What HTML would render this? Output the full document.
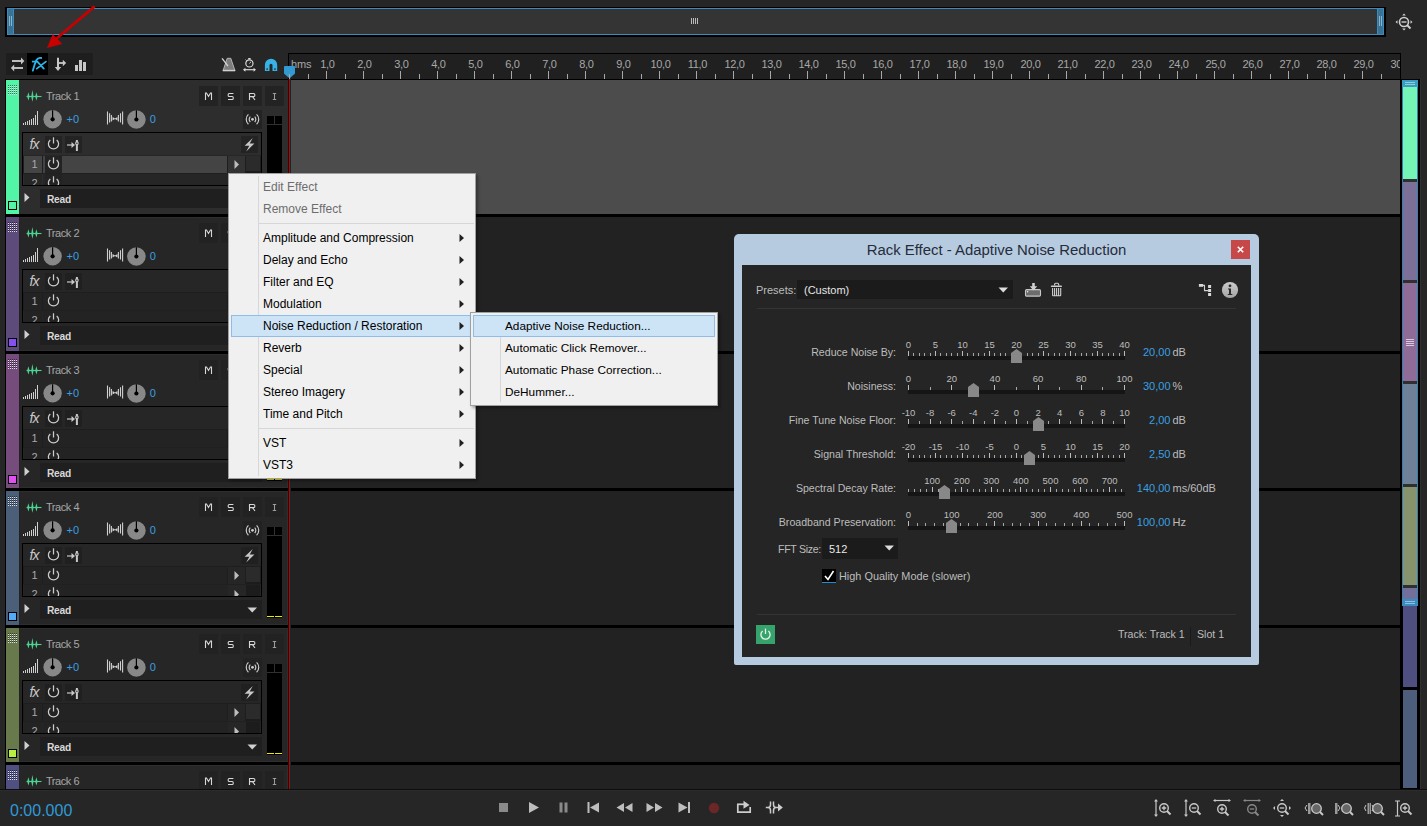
<!DOCTYPE html>
<html><head><meta charset="utf-8"><title>Rack Effect</title>
<style>
html,body{margin:0;padding:0;}
body{width:1427px;height:826px;overflow:hidden;background:#262626;position:relative;font-family:"Liberation Sans", sans-serif;}
body div{position:absolute;box-sizing:border-box;}
.t{white-space:pre;line-height:1;}
svg{overflow:visible}
</style></head><body>

<div style="left:5px;top:7px;width:1381px;height:30px;background:#000;"></div>
<div style="left:7px;top:8px;width:1377px;height:27px;background:#3a8cc0;"></div>
<div style="left:7px;top:9px;width:1377px;height:25px;background:#343434;"></div>
<div style="left:7px;top:8px;width:7px;height:27px;background:#3a8cc0;"></div>
<div style="left:8px;top:9px;width:5px;height:25px;background:#3a7294;"></div>
<div style="left:9px;top:16px;width:1px;height:10px;background:#8ab4c8;"></div>
<div style="left:11px;top:16px;width:1px;height:10px;background:#8ab4c8;"></div>
<div style="left:1377px;top:8px;width:7px;height:27px;background:#3a8cc0;"></div>
<div style="left:1378px;top:9px;width:5px;height:25px;background:#3a7294;"></div>
<div style="left:1379px;top:16px;width:1px;height:10px;background:#8ab4c8;"></div>
<div style="left:1381px;top:16px;width:1px;height:10px;background:#8ab4c8;"></div>
<div style="left:691px;top:18px;width:1px;height:6px;background:#bbbbbb;"></div>
<div style="left:693px;top:18px;width:1px;height:6px;background:#bbbbbb;"></div>
<div style="left:695px;top:18px;width:1px;height:6px;background:#bbbbbb;"></div>
<div style="left:697px;top:18px;width:1px;height:6px;background:#bbbbbb;"></div>
<svg style="position:absolute;left:1395px;top:13px;" width="20" height="20" viewBox="0 0 20 20">
<circle cx="9" cy="9" r="4.5" fill="none" stroke="#cfcfcf" stroke-width="1.6"/>
<line x1="6.5" y1="9" x2="11.5" y2="9" stroke="#cfcfcf" stroke-width="1.4"/>
<line x1="12" y1="12" x2="15.5" y2="15.5" stroke="#cfcfcf" stroke-width="2"/>
<path d="M9 0.5 L10.8 2.5 L7.2 2.5Z M9 17.5 L10.8 15.5 L7.2 15.5Z M0.5 9 L2.5 7.2 L2.5 10.8Z M17.5 9 L15.5 7.2 L15.5 10.8Z" fill="#cfcfcf"/>
</svg>
<div style="left:6px;top:53px;width:87px;height:22px;background:#1e1e1e;"></div>
<div style="left:27px;top:53px;width:21px;height:22px;background:#000;"></div>
<svg style="position:absolute;left:9px;top:54px;" width="18" height="17" viewBox="0 0 18 17">
<path d="M3 7 H13" stroke="#d0d0d0" stroke-width="1.8"/>
<path d="M12 3.6 L15.3 7 L12 10.4Z" fill="#c8c8c8"/>
<path d="M4.5 14 H14" stroke="#d0d0d0" stroke-width="1.8"/>
<path d="M5.2 10.6 L1.9 14 L5.2 17.4Z" fill="#c8c8c8"/>
</svg>
<svg style="position:absolute;left:27px;top:53px;" width="21" height="22" viewBox="0 0 21 22"><path d="M5.8 17.7 Q7.5 11 9.5 7 Q11 4.3 14.2 5" fill="none" stroke="#2cb4ea" stroke-width="1.8" stroke-linecap="round"/><path d="M4.9 8.6 H10.1" stroke="#2cb4ea" stroke-width="1.7"/><path d="M10.3 8.6 L16.8 15.6 M18.9 8.6 L9.8 15.6" stroke="#2cb4ea" stroke-width="1.8" stroke-linecap="round"/></svg>
<svg style="position:absolute;left:52px;top:56px;" width="16" height="17" viewBox="0 0 16 17">
<path d="M6 1.8 V12" stroke="#c8c8c8" stroke-width="2"/>
<path d="M2.8 11 L6 15 L9.2 11Z" fill="#c8c8c8"/>
<path d="M6.5 7 H11.5" stroke="#c8c8c8" stroke-width="1.8"/>
<path d="M10.8 3.8 L14.2 7 L10.8 10.2Z" fill="#c8c8c8"/>
</svg>
<svg style="position:absolute;left:73px;top:58px;" width="14" height="14" viewBox="0 0 14 14">
<rect x="2" y="7" width="3" height="6" fill="#c8c8c8"/>
<rect x="6" y="2" width="3" height="11" fill="#c8c8c8"/>
<rect x="10" y="4" width="3" height="9" fill="#c8c8c8"/>
</svg>
<svg style="position:absolute;left:220px;top:55px;" width="18" height="18" viewBox="0 0 18 18"><path d="M7.2 3.3 H10.8 L15 15.8 H3Z" fill="#7c7c7c" stroke="#bdbdbd" stroke-width="0.9"/><rect x="2.8" y="14.8" width="12.4" height="1.3" fill="#d0d0d0"/><path d="M2.1 3.3 L8 11.2" stroke="#d8d8d8" stroke-width="1.3"/></svg>
<svg style="position:absolute;left:240px;top:55px;" width="18" height="18" viewBox="0 0 18 18"><circle cx="9.4" cy="8.4" r="3.6" fill="none" stroke="#d8d8d8" stroke-width="1.2"/><path d="M9.4 8.4 L11 6.8" stroke="#d8d8d8" stroke-width="1"/><rect x="8.2" y="3" width="2.4" height="1.4" fill="#d8d8d8"/><path d="M5.6 4.6 L6.6 5.6" stroke="#d8d8d8" stroke-width="1"/><path d="M4 14.7 H15" stroke="#d8d8d8" stroke-width="1.2"/><path d="M3 14.7 L5.4 12.7 V16.7Z M16 14.7 L13.6 12.7 V16.7Z" fill="#d8d8d8"/></svg>
<svg style="position:absolute;left:262px;top:56px;" width="18" height="16" viewBox="0 0 18 16"><path d="M2.9 15.1 V8.95 A6.15 6.15 0 0 1 15.2 8.95 V15.1 H10.5 V9.2 A1.5 1.5 0 0 0 7.5 9.2 V15.1Z" fill="#38b2e6"/><rect x="4.4" y="12.3" width="1.5" height="1.6" fill="#1a3a4a"/><rect x="12.2" y="12.3" width="1.5" height="1.6" fill="#1a3a4a"/></svg>
<div style="left:288px;top:53px;width:1113px;height:26px;background:#000;"></div>
<div style="left:289px;top:54px;width:1111px;height:25px;background:#202020;"></div>
<div style="left:289px;top:54px;width:1111px;height:25px;overflow:hidden">
<svg style="position:absolute;left:0;top:0" width="1111" height="25"><rect x="19" y="20" width="1" height="5" fill="#a8a8a8"/><rect x="37" y="17" width="1" height="8" fill="#a8a8a8"/><rect x="56" y="20" width="1" height="5" fill="#a8a8a8"/><rect x="74" y="17" width="1" height="8" fill="#a8a8a8"/><rect x="93" y="20" width="1" height="5" fill="#a8a8a8"/><rect x="111" y="17" width="1" height="8" fill="#a8a8a8"/><rect x="130" y="20" width="1" height="5" fill="#a8a8a8"/><rect x="148" y="17" width="1" height="8" fill="#a8a8a8"/><rect x="167" y="20" width="1" height="5" fill="#a8a8a8"/><rect x="185" y="17" width="1" height="8" fill="#a8a8a8"/><rect x="204" y="20" width="1" height="5" fill="#a8a8a8"/><rect x="222" y="17" width="1" height="8" fill="#a8a8a8"/><rect x="241" y="20" width="1" height="5" fill="#a8a8a8"/><rect x="259" y="17" width="1" height="8" fill="#a8a8a8"/><rect x="278" y="20" width="1" height="5" fill="#a8a8a8"/><rect x="296" y="17" width="1" height="8" fill="#a8a8a8"/><rect x="315" y="20" width="1" height="5" fill="#a8a8a8"/><rect x="333" y="17" width="1" height="8" fill="#a8a8a8"/><rect x="352" y="20" width="1" height="5" fill="#a8a8a8"/><rect x="370" y="17" width="1" height="8" fill="#a8a8a8"/><rect x="389" y="20" width="1" height="5" fill="#a8a8a8"/><rect x="407" y="17" width="1" height="8" fill="#a8a8a8"/><rect x="426" y="20" width="1" height="5" fill="#a8a8a8"/><rect x="444" y="17" width="1" height="8" fill="#a8a8a8"/><rect x="463" y="20" width="1" height="5" fill="#a8a8a8"/><rect x="481" y="17" width="1" height="8" fill="#a8a8a8"/><rect x="500" y="20" width="1" height="5" fill="#a8a8a8"/><rect x="518" y="17" width="1" height="8" fill="#a8a8a8"/><rect x="537" y="20" width="1" height="5" fill="#a8a8a8"/><rect x="555" y="17" width="1" height="8" fill="#a8a8a8"/><rect x="574" y="20" width="1" height="5" fill="#a8a8a8"/><rect x="592" y="17" width="1" height="8" fill="#a8a8a8"/><rect x="611" y="20" width="1" height="5" fill="#a8a8a8"/><rect x="629" y="17" width="1" height="8" fill="#a8a8a8"/><rect x="648" y="20" width="1" height="5" fill="#a8a8a8"/><rect x="666" y="17" width="1" height="8" fill="#a8a8a8"/><rect x="685" y="20" width="1" height="5" fill="#a8a8a8"/><rect x="703" y="17" width="1" height="8" fill="#a8a8a8"/><rect x="722" y="20" width="1" height="5" fill="#a8a8a8"/><rect x="740" y="17" width="1" height="8" fill="#a8a8a8"/><rect x="759" y="20" width="1" height="5" fill="#a8a8a8"/><rect x="777" y="17" width="1" height="8" fill="#a8a8a8"/><rect x="796" y="20" width="1" height="5" fill="#a8a8a8"/><rect x="814" y="17" width="1" height="8" fill="#a8a8a8"/><rect x="833" y="20" width="1" height="5" fill="#a8a8a8"/><rect x="851" y="17" width="1" height="8" fill="#a8a8a8"/><rect x="870" y="20" width="1" height="5" fill="#a8a8a8"/><rect x="888" y="17" width="1" height="8" fill="#a8a8a8"/><rect x="907" y="20" width="1" height="5" fill="#a8a8a8"/><rect x="925" y="17" width="1" height="8" fill="#a8a8a8"/><rect x="944" y="20" width="1" height="5" fill="#a8a8a8"/><rect x="962" y="17" width="1" height="8" fill="#a8a8a8"/><rect x="981" y="20" width="1" height="5" fill="#a8a8a8"/><rect x="999" y="17" width="1" height="8" fill="#a8a8a8"/><rect x="1018" y="20" width="1" height="5" fill="#a8a8a8"/><rect x="1036" y="17" width="1" height="8" fill="#a8a8a8"/><rect x="1055" y="20" width="1" height="5" fill="#a8a8a8"/><rect x="1073" y="17" width="1" height="8" fill="#a8a8a8"/><rect x="1092" y="20" width="1" height="5" fill="#a8a8a8"/></svg>
<div class="t" style="left:2px;top:4px;font-size:11px;color:#a8a8a8;line-height:12px;letter-spacing:-0.2px">hms</div>
<div class="t" style="left:8.5px;width:60px;text-align:center;top:4px;font-size:11px;color:#a8a8a8;line-height:12px;letter-spacing:-0.3px">1,0</div>
<div class="t" style="left:45.5px;width:60px;text-align:center;top:4px;font-size:11px;color:#a8a8a8;line-height:12px;letter-spacing:-0.3px">2,0</div>
<div class="t" style="left:82.5px;width:60px;text-align:center;top:4px;font-size:11px;color:#a8a8a8;line-height:12px;letter-spacing:-0.3px">3,0</div>
<div class="t" style="left:119.5px;width:60px;text-align:center;top:4px;font-size:11px;color:#a8a8a8;line-height:12px;letter-spacing:-0.3px">4,0</div>
<div class="t" style="left:156.5px;width:60px;text-align:center;top:4px;font-size:11px;color:#a8a8a8;line-height:12px;letter-spacing:-0.3px">5,0</div>
<div class="t" style="left:193.5px;width:60px;text-align:center;top:4px;font-size:11px;color:#a8a8a8;line-height:12px;letter-spacing:-0.3px">6,0</div>
<div class="t" style="left:230.5px;width:60px;text-align:center;top:4px;font-size:11px;color:#a8a8a8;line-height:12px;letter-spacing:-0.3px">7,0</div>
<div class="t" style="left:267.5px;width:60px;text-align:center;top:4px;font-size:11px;color:#a8a8a8;line-height:12px;letter-spacing:-0.3px">8,0</div>
<div class="t" style="left:304.5px;width:60px;text-align:center;top:4px;font-size:11px;color:#a8a8a8;line-height:12px;letter-spacing:-0.3px">9,0</div>
<div class="t" style="left:341.5px;width:60px;text-align:center;top:4px;font-size:11px;color:#a8a8a8;line-height:12px;letter-spacing:-0.3px">10,0</div>
<div class="t" style="left:378.5px;width:60px;text-align:center;top:4px;font-size:11px;color:#a8a8a8;line-height:12px;letter-spacing:-0.3px">11,0</div>
<div class="t" style="left:415.5px;width:60px;text-align:center;top:4px;font-size:11px;color:#a8a8a8;line-height:12px;letter-spacing:-0.3px">12,0</div>
<div class="t" style="left:452.5px;width:60px;text-align:center;top:4px;font-size:11px;color:#a8a8a8;line-height:12px;letter-spacing:-0.3px">13,0</div>
<div class="t" style="left:489.5px;width:60px;text-align:center;top:4px;font-size:11px;color:#a8a8a8;line-height:12px;letter-spacing:-0.3px">14,0</div>
<div class="t" style="left:526.5px;width:60px;text-align:center;top:4px;font-size:11px;color:#a8a8a8;line-height:12px;letter-spacing:-0.3px">15,0</div>
<div class="t" style="left:563.5px;width:60px;text-align:center;top:4px;font-size:11px;color:#a8a8a8;line-height:12px;letter-spacing:-0.3px">16,0</div>
<div class="t" style="left:600.5px;width:60px;text-align:center;top:4px;font-size:11px;color:#a8a8a8;line-height:12px;letter-spacing:-0.3px">17,0</div>
<div class="t" style="left:637.5px;width:60px;text-align:center;top:4px;font-size:11px;color:#a8a8a8;line-height:12px;letter-spacing:-0.3px">18,0</div>
<div class="t" style="left:674.5px;width:60px;text-align:center;top:4px;font-size:11px;color:#a8a8a8;line-height:12px;letter-spacing:-0.3px">19,0</div>
<div class="t" style="left:711.5px;width:60px;text-align:center;top:4px;font-size:11px;color:#a8a8a8;line-height:12px;letter-spacing:-0.3px">20,0</div>
<div class="t" style="left:748.5px;width:60px;text-align:center;top:4px;font-size:11px;color:#a8a8a8;line-height:12px;letter-spacing:-0.3px">21,0</div>
<div class="t" style="left:785.5px;width:60px;text-align:center;top:4px;font-size:11px;color:#a8a8a8;line-height:12px;letter-spacing:-0.3px">22,0</div>
<div class="t" style="left:822.5px;width:60px;text-align:center;top:4px;font-size:11px;color:#a8a8a8;line-height:12px;letter-spacing:-0.3px">23,0</div>
<div class="t" style="left:859.5px;width:60px;text-align:center;top:4px;font-size:11px;color:#a8a8a8;line-height:12px;letter-spacing:-0.3px">24,0</div>
<div class="t" style="left:896.5px;width:60px;text-align:center;top:4px;font-size:11px;color:#a8a8a8;line-height:12px;letter-spacing:-0.3px">25,0</div>
<div class="t" style="left:933.5px;width:60px;text-align:center;top:4px;font-size:11px;color:#a8a8a8;line-height:12px;letter-spacing:-0.3px">26,0</div>
<div class="t" style="left:970.5px;width:60px;text-align:center;top:4px;font-size:11px;color:#a8a8a8;line-height:12px;letter-spacing:-0.3px">27,0</div>
<div class="t" style="left:1007.5px;width:60px;text-align:center;top:4px;font-size:11px;color:#a8a8a8;line-height:12px;letter-spacing:-0.3px">28,0</div>
<div class="t" style="left:1044.5px;width:60px;text-align:center;top:4px;font-size:11px;color:#a8a8a8;line-height:12px;letter-spacing:-0.3px">29,0</div>
<div class="t" style="left:1081.5px;width:60px;text-align:center;top:4px;font-size:11px;color:#a8a8a8;line-height:12px;letter-spacing:-0.3px">30,0</div>
</div>
<svg style="position:absolute;left:284px;top:66px;" width="12" height="13" viewBox="0 0 12 13"><path d="M0 1 Q0 0 1 0 H10 Q11 0 11 1 V7.5 L5.5 12.5 L0 7.5Z" fill="#3399d0"/><rect x="5" y="8" width="1" height="5" fill="#aaaaaa"/></svg>
<div style="left:5px;top:79px;width:284px;height:711px;background:#000;"></div>
<div style="left:6px;top:80px;width:282px;height:134px;overflow:hidden;background:#2d2d2d">
<div style="left:0px;top:0px;width:13px;height:134px;background:#52f5a6;"></div>
<svg style="position:absolute;left:1px;top:4px" width="11" height="14" viewBox="0 0 11 14"><rect x="1" y="2" width="1" height="1" fill="#e0e0ea"/><rect x="1" y="1" width="1" height="1" fill="#000" fill-opacity="0.5"/><rect x="1" y="4" width="1" height="1" fill="#e0e0ea"/><rect x="1" y="3" width="1" height="1" fill="#000" fill-opacity="0.5"/><rect x="1" y="6" width="1" height="1" fill="#e0e0ea"/><rect x="1" y="5" width="1" height="1" fill="#000" fill-opacity="0.5"/><rect x="1" y="8" width="1" height="1" fill="#e0e0ea"/><rect x="1" y="7" width="1" height="1" fill="#000" fill-opacity="0.5"/><rect x="1" y="10" width="1" height="1" fill="#e0e0ea"/><rect x="1" y="9" width="1" height="1" fill="#000" fill-opacity="0.5"/><rect x="3" y="2" width="1" height="1" fill="#e0e0ea"/><rect x="3" y="1" width="1" height="1" fill="#000" fill-opacity="0.5"/><rect x="3" y="4" width="1" height="1" fill="#e0e0ea"/><rect x="3" y="3" width="1" height="1" fill="#000" fill-opacity="0.5"/><rect x="3" y="6" width="1" height="1" fill="#e0e0ea"/><rect x="3" y="5" width="1" height="1" fill="#000" fill-opacity="0.5"/><rect x="3" y="8" width="1" height="1" fill="#e0e0ea"/><rect x="3" y="7" width="1" height="1" fill="#000" fill-opacity="0.5"/><rect x="3" y="10" width="1" height="1" fill="#e0e0ea"/><rect x="3" y="9" width="1" height="1" fill="#000" fill-opacity="0.5"/><rect x="5" y="2" width="1" height="1" fill="#e0e0ea"/><rect x="5" y="1" width="1" height="1" fill="#000" fill-opacity="0.5"/><rect x="5" y="4" width="1" height="1" fill="#e0e0ea"/><rect x="5" y="3" width="1" height="1" fill="#000" fill-opacity="0.5"/><rect x="5" y="6" width="1" height="1" fill="#e0e0ea"/><rect x="5" y="5" width="1" height="1" fill="#000" fill-opacity="0.5"/><rect x="5" y="8" width="1" height="1" fill="#e0e0ea"/><rect x="5" y="7" width="1" height="1" fill="#000" fill-opacity="0.5"/><rect x="5" y="10" width="1" height="1" fill="#e0e0ea"/><rect x="5" y="9" width="1" height="1" fill="#000" fill-opacity="0.5"/><rect x="7" y="2" width="1" height="1" fill="#e0e0ea"/><rect x="7" y="1" width="1" height="1" fill="#000" fill-opacity="0.5"/><rect x="7" y="4" width="1" height="1" fill="#e0e0ea"/><rect x="7" y="3" width="1" height="1" fill="#000" fill-opacity="0.5"/><rect x="7" y="6" width="1" height="1" fill="#e0e0ea"/><rect x="7" y="5" width="1" height="1" fill="#000" fill-opacity="0.5"/><rect x="7" y="8" width="1" height="1" fill="#e0e0ea"/><rect x="7" y="7" width="1" height="1" fill="#000" fill-opacity="0.5"/><rect x="7" y="10" width="1" height="1" fill="#e0e0ea"/><rect x="7" y="9" width="1" height="1" fill="#000" fill-opacity="0.5"/><rect x="9" y="2" width="1" height="1" fill="#e0e0ea"/><rect x="9" y="1" width="1" height="1" fill="#000" fill-opacity="0.5"/><rect x="9" y="4" width="1" height="1" fill="#e0e0ea"/><rect x="9" y="3" width="1" height="1" fill="#000" fill-opacity="0.5"/><rect x="9" y="6" width="1" height="1" fill="#e0e0ea"/><rect x="9" y="5" width="1" height="1" fill="#000" fill-opacity="0.5"/><rect x="9" y="8" width="1" height="1" fill="#e0e0ea"/><rect x="9" y="7" width="1" height="1" fill="#000" fill-opacity="0.5"/><rect x="9" y="10" width="1" height="1" fill="#e0e0ea"/><rect x="9" y="9" width="1" height="1" fill="#000" fill-opacity="0.5"/></svg>
<div style="left:2px;top:121px;width:9px;height:9px;background:#000;"></div>
<div style="left:3px;top:122px;width:7px;height:7px;background:#52f5a6;"></div>
<svg style="position:absolute;left:0;top:0" width="50" height="30" viewBox="6 0 50 30"><path d="M26.5 16.5 H41.5" stroke="#4cd391" stroke-width="1.1"/><path d="M28.4 12.3 L29.599999999999998 16.5 L28.4 20.4 L27.2 16.5Z" fill="#4cd391"/><path d="M32.4 10 L33.6 16.5 L32.4 21.8 L31.2 16.5Z" fill="#4cd391"/><path d="M36.4 12.3 L37.6 16.5 L36.4 20.4 L35.199999999999996 16.5Z" fill="#4cd391"/></svg>
<div class="t" style="left:40px;top:10px;font-size:11px;color:#a6a6a6;line-height:12px;letter-spacing:-0.45px">Track 1</div>
<div style="left:193px;top:6px;width:19px;height:20px;background:#232323;"></div>
<svg style="position:absolute;left:198px;top:12px" width="9" height="9" viewBox="0 0 9 9"><path d="M1.5 8 V1 H2.5 L4.5 4.5 L6.5 1 H7.5 V8" fill="none" stroke="#d8d8d8" stroke-width="1.1"/></svg>
<div style="left:215px;top:6px;width:19px;height:20px;background:#232323;"></div>
<svg style="position:absolute;left:220px;top:12px" width="9" height="9" viewBox="0 0 9 9"><path d="M7.4 1.5 H3.2 Q2.2 1.5 2.2 2.6 V3.4 Q2.2 4.5 3.2 4.5 H6.2 Q7.2 4.5 7.2 5.6 V6.4 Q7.2 7.5 6.2 7.5 H2" fill="none" stroke="#d8d8d8" stroke-width="1.1"/></svg>
<div style="left:237px;top:6px;width:19px;height:20px;background:#232323;"></div>
<svg style="position:absolute;left:242px;top:12px" width="9" height="9" viewBox="0 0 9 9"><path d="M1.5 8 V1.5 H5.5 Q6.8 1.5 6.8 2.8 V3.4 Q6.8 4.6 5.5 4.6 H1.5 M4.5 4.6 L7 8" fill="none" stroke="#d8d8d8" stroke-width="1.1"/></svg>
<div style="left:259px;top:6px;width:19px;height:20px;background:#232323;"></div>
<svg style="position:absolute;left:264px;top:12px" width="9" height="9" viewBox="0 0 9 9"><path d="M2.8 1.5 H6.2 M2.8 7.5 H6.2 M4.5 1.5 V7.5" fill="none" stroke="#9c9c9c" stroke-width="1.05"/></svg>
<svg style="position:absolute;left:17px;top:30px" width="17" height="16" viewBox="0 0 17 16"><rect x="0" y="13" width="1" height="2" fill="#d0d0d0"/><rect x="2" y="12" width="1" height="3" fill="#d0d0d0"/><rect x="4" y="11" width="1" height="4" fill="#d0d0d0"/><rect x="6" y="10" width="1" height="5" fill="#d0d0d0"/><rect x="8" y="9" width="1" height="6" fill="#d0d0d0"/><rect x="10" y="8" width="1" height="7" fill="#d0d0d0"/><rect x="12" y="5" width="1" height="10" fill="#d0d0d0"/><rect x="14" y="1" width="1" height="14" fill="#d0d0d0"/></svg>
<svg style="position:absolute;left:37px;top:30px" width="20" height="20" viewBox="0 0 20 20"><circle cx="9.6" cy="9.3" r="9.2" fill="#888888"/><path d="M9.6 9.3 V0.2" stroke="#000" stroke-width="1.2"/><circle cx="9.6" cy="9.3" r="2.1" fill="#000"/></svg>
<div class="t" style="left:60.5px;top:33px;font-size:11px;color:#3a9fe0;line-height:12px">+0</div>
<svg style="position:absolute;left:100px;top:30px" width="18" height="16" viewBox="0 0 18 16"><path d="M1.5 1.5 V14.5 M3.6 3.2 V12.5 M5.4 5 V11.5 M12.4 5 V11.5 M14.5 3.2 V12.5 M16.6 1.5 V14.5" stroke="#d0d0d0" stroke-width="1.1"/><path d="M6.5 7 L9 8.5 L11.5 7 V10.5 L9 9 L6.5 10.5Z" fill="#d0d0d0"/></svg>
<svg style="position:absolute;left:121px;top:30px" width="20" height="20" viewBox="0 0 20 20"><circle cx="9.4" cy="9.5" r="9.3" fill="#888888"/><path d="M9.4 9.5 V0.2" stroke="#000" stroke-width="1.2"/><circle cx="9.4" cy="9.5" r="2.1" fill="#000"/></svg>
<div class="t" style="left:143.8px;top:33px;font-size:11px;color:#3a9fe0;line-height:12px">0</div>
<div style="left:237px;top:30px;width:19px;height:19px;background:#232323;"></div>
<svg style="position:absolute;left:237px;top:30px" width="19" height="19" viewBox="0 0 19 19"><circle cx="9.5" cy="9.3" r="1.4" fill="#d0d0d0"/><path d="M7.3 6.6 A3.8 3.8 0 0 0 7.3 12 M11.7 6.6 A3.8 3.8 0 0 1 11.7 12 M5.4 4.4 A6.6 6.6 0 0 0 5.4 14.2 M13.6 4.4 A6.6 6.6 0 0 1 13.6 14.2" fill="none" stroke="#d0d0d0" stroke-width="1.15"/></svg>
<div style="left:261px;top:36px;width:15px;height:91px;background:#000;"></div>
<div style="left:261px;top:44px;width:15px;height:1px;background:#303030;"></div>
<div style="left:268px;top:36px;width:1px;height:8px;background:#303030;"></div>
<div style="left:261px;top:125px;width:7px;height:1px;background:#f0e800;"></div>
<div style="left:269px;top:125px;width:7px;height:1px;background:#f0e800;"></div>
<div style="left:16px;top:52px;width:240px;height:54px;background:#000;overflow:hidden">
<div style="left:1px;top:1px;width:238px;height:52px;background:#2d2d2d"></div>
<div class="t" style="left:7.5px;top:4px;font-size:14px;color:#c8c8c8;font-style:italic;line-height:16px;letter-spacing:-0.8px">fx</div>
<div style="left:23px;top:4px;width:17px;height:17px;background:#232323"></div>
<svg style="position:absolute;left:23px;top:4px" width="17" height="17" viewBox="0 0 17 17"><path d="M5.3 3.9 A5.1 5.1 0 1 0 11.7 3.9" fill="none" stroke="#cdcdcd" stroke-width="1.25"/><path d="M8.5 1.3 V7.5" stroke="#cdcdcd" stroke-width="1.25"/></svg>
<div style="left:43px;top:4px;width:17px;height:17px;background:#232323"></div>
<svg style="position:absolute;left:43px;top:4px" width="17" height="17" viewBox="0 0 17 17"><path d="M2 9 H7.5" stroke="#c8c8c8" stroke-width="1.2"/><path d="M6.5 6 L10 9 L6.5 12Z" fill="#c8c8c8"/><rect x="10.9" y="4" width="2" height="11" fill="#c8c8c8"/><rect x="10.2" y="5.5" width="3.4" height="3.5" rx="1.2" fill="#c8c8c8"/><circle cx="11.9" cy="7.2" r="0.7" fill="#232323"/></svg>
<div style="left:219px;top:4px;width:17px;height:17px;background:#232323"></div>
<svg style="position:absolute;left:219px;top:4px" width="17" height="17" viewBox="0 0 17 17"><path d="M11.8 2 L3.6 9.8 H8.3 L5.2 15.5 L13.4 7.5 H8.7Z" fill="#c8c8c8"/></svg>
<div style="left:1px;top:23px;width:238px;height:1px;background:#262626"></div>
<div style="left:1px;top:24px;width:238px;height:17px;background:#1e1e1e"></div>
<div style="left:2px;top:24px;width:18px;height:17px;background:#444444"></div>
<div style="left:21px;top:24px;width:2px;height:17px;background:#444444"></div>
<div style="left:40px;top:24px;width:166px;height:17px;background:#444444"></div>
<div class="t" style="left:9.5px;top:26px;font-size:11px;color:#a9a9a9;line-height:12px">1</div>
<div style="left:23px;top:24px;width:17px;height:17px;background:#232323"></div>
<svg style="position:absolute;left:23px;top:24px" width="17" height="17" viewBox="0 0 17 17"><path d="M5.3 3.9 A5.1 5.1 0 1 0 11.7 3.9" fill="none" stroke="#cdcdcd" stroke-width="1.25"/><path d="M8.5 1.3 V7.5" stroke="#cdcdcd" stroke-width="1.25"/></svg>
<div style="left:206px;top:24px;width:17px;height:17px;background:#333333"></div>
<svg style="position:absolute;left:206px;top:24px" width="17" height="17" viewBox="0 0 17 17"><path d="M6.5 4 L11 8.5 L6.5 13Z" fill="#bdbdbd"/></svg>
<div style="left:224px;top:24px;width:14px;height:15px;background:#2b2b2b"></div>
<div style="left:224px;top:39px;width:14px;height:15px;background:#1c1c1c"></div>
<div style="left:205px;top:24px;width:1px;height:29px;background:#1e1e1e"></div>
<div style="left:1px;top:41px;width:238px;height:1px;background:#202020"></div>
<div style="left:2px;top:42px;width:18px;height:11px;background:#262626"></div>
<div style="left:21px;top:42px;width:2px;height:11px;background:#262626"></div>
<div style="left:40px;top:42px;width:166px;height:11px;background:#262626"></div>
<div class="t" style="left:9.5px;top:45px;font-size:11px;color:#a9a9a9;line-height:12px">2</div>
<div style="left:23px;top:42px;width:17px;height:11px;background:#232323"></div>
<svg style="position:absolute;left:23px;top:42.5px" width="17" height="17" viewBox="0 0 17 17"><path d="M5.3 3.9 A5.1 5.1 0 1 0 11.7 3.9" fill="none" stroke="#cdcdcd" stroke-width="1.25"/><path d="M8.5 1.3 V7.5" stroke="#cdcdcd" stroke-width="1.25"/></svg>
<div style="left:206px;top:42px;width:17px;height:11px;background:#262626"></div>
<svg style="position:absolute;left:206px;top:42.5px" width="17" height="17" viewBox="0 0 17 17"><path d="M6.5 4 L11 8.5 L6.5 13Z" fill="#bdbdbd"/></svg>
<div style="left:239px;top:1px;width:1px;height:52px;background:#000"></div>
<div style="left:1px;top:53px;width:238px;height:1px;background:#000"></div>
</div>
<svg style="position:absolute;left:18px;top:112px" width="7" height="11" viewBox="0 0 7 11"><path d="M0.5 1 L5.5 5.5 L0.5 10Z" fill="#cfcfcf"/></svg>
<div style="left:34px;top:109px;width:222px;height:19px;background:#1f1f1f;"></div>
<div class="t" style="left:41px;top:114px;font-size:10.2px;color:#d8d8d8;line-height:12px;font-weight:bold;letter-spacing:-0.25px">Read</div>
</div>
<div style="left:6px;top:217px;width:282px;height:134px;overflow:hidden;background:#262626">
<div style="left:13px;top:0px;width:269px;height:1px;background:#2e2e2e;"></div>
<div style="left:13px;top:133px;width:269px;height:1px;background:#2e2e2e;"></div>
<div style="left:281px;top:0px;width:1px;height:134px;background:#2e2e2e;"></div>
<div style="left:13px;top:0px;width:1px;height:134px;background:#222222;"></div>
<div style="left:0px;top:0px;width:13px;height:134px;background:#5d4b7b;"></div>
<svg style="position:absolute;left:1px;top:4px" width="11" height="14" viewBox="0 0 11 14"><rect x="1" y="2" width="1" height="1" fill="#e0e0ea"/><rect x="1" y="1" width="1" height="1" fill="#000" fill-opacity="0.5"/><rect x="1" y="4" width="1" height="1" fill="#e0e0ea"/><rect x="1" y="3" width="1" height="1" fill="#000" fill-opacity="0.5"/><rect x="1" y="6" width="1" height="1" fill="#e0e0ea"/><rect x="1" y="5" width="1" height="1" fill="#000" fill-opacity="0.5"/><rect x="1" y="8" width="1" height="1" fill="#e0e0ea"/><rect x="1" y="7" width="1" height="1" fill="#000" fill-opacity="0.5"/><rect x="1" y="10" width="1" height="1" fill="#e0e0ea"/><rect x="1" y="9" width="1" height="1" fill="#000" fill-opacity="0.5"/><rect x="3" y="2" width="1" height="1" fill="#e0e0ea"/><rect x="3" y="1" width="1" height="1" fill="#000" fill-opacity="0.5"/><rect x="3" y="4" width="1" height="1" fill="#e0e0ea"/><rect x="3" y="3" width="1" height="1" fill="#000" fill-opacity="0.5"/><rect x="3" y="6" width="1" height="1" fill="#e0e0ea"/><rect x="3" y="5" width="1" height="1" fill="#000" fill-opacity="0.5"/><rect x="3" y="8" width="1" height="1" fill="#e0e0ea"/><rect x="3" y="7" width="1" height="1" fill="#000" fill-opacity="0.5"/><rect x="3" y="10" width="1" height="1" fill="#e0e0ea"/><rect x="3" y="9" width="1" height="1" fill="#000" fill-opacity="0.5"/><rect x="5" y="2" width="1" height="1" fill="#e0e0ea"/><rect x="5" y="1" width="1" height="1" fill="#000" fill-opacity="0.5"/><rect x="5" y="4" width="1" height="1" fill="#e0e0ea"/><rect x="5" y="3" width="1" height="1" fill="#000" fill-opacity="0.5"/><rect x="5" y="6" width="1" height="1" fill="#e0e0ea"/><rect x="5" y="5" width="1" height="1" fill="#000" fill-opacity="0.5"/><rect x="5" y="8" width="1" height="1" fill="#e0e0ea"/><rect x="5" y="7" width="1" height="1" fill="#000" fill-opacity="0.5"/><rect x="5" y="10" width="1" height="1" fill="#e0e0ea"/><rect x="5" y="9" width="1" height="1" fill="#000" fill-opacity="0.5"/><rect x="7" y="2" width="1" height="1" fill="#e0e0ea"/><rect x="7" y="1" width="1" height="1" fill="#000" fill-opacity="0.5"/><rect x="7" y="4" width="1" height="1" fill="#e0e0ea"/><rect x="7" y="3" width="1" height="1" fill="#000" fill-opacity="0.5"/><rect x="7" y="6" width="1" height="1" fill="#e0e0ea"/><rect x="7" y="5" width="1" height="1" fill="#000" fill-opacity="0.5"/><rect x="7" y="8" width="1" height="1" fill="#e0e0ea"/><rect x="7" y="7" width="1" height="1" fill="#000" fill-opacity="0.5"/><rect x="7" y="10" width="1" height="1" fill="#e0e0ea"/><rect x="7" y="9" width="1" height="1" fill="#000" fill-opacity="0.5"/><rect x="9" y="2" width="1" height="1" fill="#e0e0ea"/><rect x="9" y="1" width="1" height="1" fill="#000" fill-opacity="0.5"/><rect x="9" y="4" width="1" height="1" fill="#e0e0ea"/><rect x="9" y="3" width="1" height="1" fill="#000" fill-opacity="0.5"/><rect x="9" y="6" width="1" height="1" fill="#e0e0ea"/><rect x="9" y="5" width="1" height="1" fill="#000" fill-opacity="0.5"/><rect x="9" y="8" width="1" height="1" fill="#e0e0ea"/><rect x="9" y="7" width="1" height="1" fill="#000" fill-opacity="0.5"/><rect x="9" y="10" width="1" height="1" fill="#e0e0ea"/><rect x="9" y="9" width="1" height="1" fill="#000" fill-opacity="0.5"/></svg>
<div style="left:2px;top:121px;width:9px;height:9px;background:#000;"></div>
<div style="left:3px;top:122px;width:7px;height:7px;background:#8650f0;"></div>
<svg style="position:absolute;left:0;top:0" width="50" height="30" viewBox="6 0 50 30"><path d="M26.5 16.5 H41.5" stroke="#4cd391" stroke-width="1.1"/><path d="M28.4 12.3 L29.599999999999998 16.5 L28.4 20.4 L27.2 16.5Z" fill="#4cd391"/><path d="M32.4 10 L33.6 16.5 L32.4 21.8 L31.2 16.5Z" fill="#4cd391"/><path d="M36.4 12.3 L37.6 16.5 L36.4 20.4 L35.199999999999996 16.5Z" fill="#4cd391"/></svg>
<div class="t" style="left:40px;top:10px;font-size:11px;color:#a6a6a6;line-height:12px;letter-spacing:-0.45px">Track 2</div>
<div style="left:193px;top:6px;width:19px;height:20px;background:#222222;"></div>
<svg style="position:absolute;left:198px;top:12px" width="9" height="9" viewBox="0 0 9 9"><path d="M1.5 8 V1 H2.5 L4.5 4.5 L6.5 1 H7.5 V8" fill="none" stroke="#d8d8d8" stroke-width="1.1"/></svg>
<div style="left:215px;top:6px;width:19px;height:20px;background:#222222;"></div>
<svg style="position:absolute;left:220px;top:12px" width="9" height="9" viewBox="0 0 9 9"><path d="M7.4 1.5 H3.2 Q2.2 1.5 2.2 2.6 V3.4 Q2.2 4.5 3.2 4.5 H6.2 Q7.2 4.5 7.2 5.6 V6.4 Q7.2 7.5 6.2 7.5 H2" fill="none" stroke="#d8d8d8" stroke-width="1.1"/></svg>
<div style="left:237px;top:6px;width:19px;height:20px;background:#222222;"></div>
<svg style="position:absolute;left:242px;top:12px" width="9" height="9" viewBox="0 0 9 9"><path d="M1.5 8 V1.5 H5.5 Q6.8 1.5 6.8 2.8 V3.4 Q6.8 4.6 5.5 4.6 H1.5 M4.5 4.6 L7 8" fill="none" stroke="#d8d8d8" stroke-width="1.1"/></svg>
<div style="left:259px;top:6px;width:19px;height:20px;background:#222222;"></div>
<svg style="position:absolute;left:264px;top:12px" width="9" height="9" viewBox="0 0 9 9"><path d="M2.8 1.5 H6.2 M2.8 7.5 H6.2 M4.5 1.5 V7.5" fill="none" stroke="#9c9c9c" stroke-width="1.05"/></svg>
<svg style="position:absolute;left:17px;top:30px" width="17" height="16" viewBox="0 0 17 16"><rect x="0" y="13" width="1" height="2" fill="#d0d0d0"/><rect x="2" y="12" width="1" height="3" fill="#d0d0d0"/><rect x="4" y="11" width="1" height="4" fill="#d0d0d0"/><rect x="6" y="10" width="1" height="5" fill="#d0d0d0"/><rect x="8" y="9" width="1" height="6" fill="#d0d0d0"/><rect x="10" y="8" width="1" height="7" fill="#d0d0d0"/><rect x="12" y="5" width="1" height="10" fill="#d0d0d0"/><rect x="14" y="1" width="1" height="14" fill="#d0d0d0"/></svg>
<svg style="position:absolute;left:37px;top:30px" width="20" height="20" viewBox="0 0 20 20"><circle cx="9.6" cy="9.3" r="9.2" fill="#888888"/><path d="M9.6 9.3 V0.2" stroke="#000" stroke-width="1.2"/><circle cx="9.6" cy="9.3" r="2.1" fill="#000"/></svg>
<div class="t" style="left:60.5px;top:33px;font-size:11px;color:#3a9fe0;line-height:12px">+0</div>
<svg style="position:absolute;left:100px;top:30px" width="18" height="16" viewBox="0 0 18 16"><path d="M1.5 1.5 V14.5 M3.6 3.2 V12.5 M5.4 5 V11.5 M12.4 5 V11.5 M14.5 3.2 V12.5 M16.6 1.5 V14.5" stroke="#d0d0d0" stroke-width="1.1"/><path d="M6.5 7 L9 8.5 L11.5 7 V10.5 L9 9 L6.5 10.5Z" fill="#d0d0d0"/></svg>
<svg style="position:absolute;left:121px;top:30px" width="20" height="20" viewBox="0 0 20 20"><circle cx="9.4" cy="9.5" r="9.3" fill="#888888"/><path d="M9.4 9.5 V0.2" stroke="#000" stroke-width="1.2"/><circle cx="9.4" cy="9.5" r="2.1" fill="#000"/></svg>
<div class="t" style="left:143.8px;top:33px;font-size:11px;color:#3a9fe0;line-height:12px">0</div>
<div style="left:237px;top:30px;width:19px;height:19px;background:#222222;"></div>
<svg style="position:absolute;left:237px;top:30px" width="19" height="19" viewBox="0 0 19 19"><circle cx="9.5" cy="9.3" r="1.4" fill="#d0d0d0"/><path d="M7.3 6.6 A3.8 3.8 0 0 0 7.3 12 M11.7 6.6 A3.8 3.8 0 0 1 11.7 12 M5.4 4.4 A6.6 6.6 0 0 0 5.4 14.2 M13.6 4.4 A6.6 6.6 0 0 1 13.6 14.2" fill="none" stroke="#d0d0d0" stroke-width="1.15"/></svg>
<div style="left:261px;top:36px;width:15px;height:91px;background:#000;"></div>
<div style="left:261px;top:44px;width:15px;height:1px;background:#303030;"></div>
<div style="left:268px;top:36px;width:1px;height:8px;background:#303030;"></div>
<div style="left:261px;top:125px;width:7px;height:1px;background:#f0e800;"></div>
<div style="left:269px;top:125px;width:7px;height:1px;background:#f0e800;"></div>
<div style="left:16px;top:52px;width:240px;height:54px;background:#000;overflow:hidden">
<div style="left:1px;top:1px;width:238px;height:52px;background:#262626"></div>
<div class="t" style="left:7.5px;top:4px;font-size:14px;color:#c8c8c8;font-style:italic;line-height:16px;letter-spacing:-0.8px">fx</div>
<div style="left:23px;top:4px;width:17px;height:17px;background:#202020"></div>
<svg style="position:absolute;left:23px;top:4px" width="17" height="17" viewBox="0 0 17 17"><path d="M5.3 3.9 A5.1 5.1 0 1 0 11.7 3.9" fill="none" stroke="#cdcdcd" stroke-width="1.25"/><path d="M8.5 1.3 V7.5" stroke="#cdcdcd" stroke-width="1.25"/></svg>
<div style="left:43px;top:4px;width:17px;height:17px;background:#202020"></div>
<svg style="position:absolute;left:43px;top:4px" width="17" height="17" viewBox="0 0 17 17"><path d="M2 9 H7.5" stroke="#c8c8c8" stroke-width="1.2"/><path d="M6.5 6 L10 9 L6.5 12Z" fill="#c8c8c8"/><rect x="10.9" y="4" width="2" height="11" fill="#c8c8c8"/><rect x="10.2" y="5.5" width="3.4" height="3.5" rx="1.2" fill="#c8c8c8"/><circle cx="11.9" cy="7.2" r="0.7" fill="#232323"/></svg>
<div style="left:219px;top:4px;width:17px;height:17px;background:#202020"></div>
<svg style="position:absolute;left:219px;top:4px" width="17" height="17" viewBox="0 0 17 17"><path d="M11.8 2 L3.6 9.8 H8.3 L5.2 15.5 L13.4 7.5 H8.7Z" fill="#c8c8c8"/></svg>
<div style="left:1px;top:23px;width:238px;height:1px;background:#1e1e1e"></div>
<div style="left:1px;top:24px;width:238px;height:17px;background:#1e1e1e"></div>
<div style="left:2px;top:24px;width:18px;height:17px;background:#232323"></div>
<div style="left:21px;top:24px;width:2px;height:17px;background:#232323"></div>
<div style="left:40px;top:24px;width:166px;height:17px;background:#232323"></div>
<div class="t" style="left:9.5px;top:26px;font-size:11px;color:#a9a9a9;line-height:12px">1</div>
<div style="left:23px;top:24px;width:17px;height:17px;background:#232323"></div>
<svg style="position:absolute;left:23px;top:24px" width="17" height="17" viewBox="0 0 17 17"><path d="M5.3 3.9 A5.1 5.1 0 1 0 11.7 3.9" fill="none" stroke="#cdcdcd" stroke-width="1.25"/><path d="M8.5 1.3 V7.5" stroke="#cdcdcd" stroke-width="1.25"/></svg>
<div style="left:206px;top:24px;width:17px;height:17px;background:#262626"></div>
<svg style="position:absolute;left:206px;top:24px" width="17" height="17" viewBox="0 0 17 17"><path d="M6.5 4 L11 8.5 L6.5 13Z" fill="#bdbdbd"/></svg>
<div style="left:224px;top:24px;width:14px;height:15px;background:#2b2b2b"></div>
<div style="left:224px;top:39px;width:14px;height:15px;background:#1c1c1c"></div>
<div style="left:205px;top:24px;width:1px;height:29px;background:#1e1e1e"></div>
<div style="left:1px;top:41px;width:238px;height:1px;background:#202020"></div>
<div style="left:2px;top:42px;width:18px;height:11px;background:#232323"></div>
<div style="left:21px;top:42px;width:2px;height:11px;background:#232323"></div>
<div style="left:40px;top:42px;width:166px;height:11px;background:#232323"></div>
<div class="t" style="left:9.5px;top:45px;font-size:11px;color:#a9a9a9;line-height:12px">2</div>
<div style="left:23px;top:42px;width:17px;height:11px;background:#232323"></div>
<svg style="position:absolute;left:23px;top:42.5px" width="17" height="17" viewBox="0 0 17 17"><path d="M5.3 3.9 A5.1 5.1 0 1 0 11.7 3.9" fill="none" stroke="#cdcdcd" stroke-width="1.25"/><path d="M8.5 1.3 V7.5" stroke="#cdcdcd" stroke-width="1.25"/></svg>
<div style="left:206px;top:42px;width:17px;height:11px;background:#262626"></div>
<svg style="position:absolute;left:206px;top:42.5px" width="17" height="17" viewBox="0 0 17 17"><path d="M6.5 4 L11 8.5 L6.5 13Z" fill="#bdbdbd"/></svg>
<div style="left:239px;top:1px;width:1px;height:52px;background:#000"></div>
<div style="left:1px;top:53px;width:238px;height:1px;background:#000"></div>
</div>
<svg style="position:absolute;left:18px;top:112px" width="7" height="11" viewBox="0 0 7 11"><path d="M0.5 1 L5.5 5.5 L0.5 10Z" fill="#cfcfcf"/></svg>
<div style="left:34px;top:109px;width:222px;height:19px;background:#1f1f1f;"></div>
<div class="t" style="left:41px;top:114px;font-size:10.2px;color:#d8d8d8;line-height:12px;font-weight:bold;letter-spacing:-0.25px">Read</div>
</div>
<div style="left:6px;top:354px;width:282px;height:134px;overflow:hidden;background:#262626">
<div style="left:13px;top:0px;width:269px;height:1px;background:#2e2e2e;"></div>
<div style="left:13px;top:133px;width:269px;height:1px;background:#2e2e2e;"></div>
<div style="left:281px;top:0px;width:1px;height:134px;background:#2e2e2e;"></div>
<div style="left:13px;top:0px;width:1px;height:134px;background:#222222;"></div>
<div style="left:0px;top:0px;width:13px;height:134px;background:#754c7b;"></div>
<svg style="position:absolute;left:1px;top:4px" width="11" height="14" viewBox="0 0 11 14"><rect x="1" y="2" width="1" height="1" fill="#e0e0ea"/><rect x="1" y="1" width="1" height="1" fill="#000" fill-opacity="0.5"/><rect x="1" y="4" width="1" height="1" fill="#e0e0ea"/><rect x="1" y="3" width="1" height="1" fill="#000" fill-opacity="0.5"/><rect x="1" y="6" width="1" height="1" fill="#e0e0ea"/><rect x="1" y="5" width="1" height="1" fill="#000" fill-opacity="0.5"/><rect x="1" y="8" width="1" height="1" fill="#e0e0ea"/><rect x="1" y="7" width="1" height="1" fill="#000" fill-opacity="0.5"/><rect x="1" y="10" width="1" height="1" fill="#e0e0ea"/><rect x="1" y="9" width="1" height="1" fill="#000" fill-opacity="0.5"/><rect x="3" y="2" width="1" height="1" fill="#e0e0ea"/><rect x="3" y="1" width="1" height="1" fill="#000" fill-opacity="0.5"/><rect x="3" y="4" width="1" height="1" fill="#e0e0ea"/><rect x="3" y="3" width="1" height="1" fill="#000" fill-opacity="0.5"/><rect x="3" y="6" width="1" height="1" fill="#e0e0ea"/><rect x="3" y="5" width="1" height="1" fill="#000" fill-opacity="0.5"/><rect x="3" y="8" width="1" height="1" fill="#e0e0ea"/><rect x="3" y="7" width="1" height="1" fill="#000" fill-opacity="0.5"/><rect x="3" y="10" width="1" height="1" fill="#e0e0ea"/><rect x="3" y="9" width="1" height="1" fill="#000" fill-opacity="0.5"/><rect x="5" y="2" width="1" height="1" fill="#e0e0ea"/><rect x="5" y="1" width="1" height="1" fill="#000" fill-opacity="0.5"/><rect x="5" y="4" width="1" height="1" fill="#e0e0ea"/><rect x="5" y="3" width="1" height="1" fill="#000" fill-opacity="0.5"/><rect x="5" y="6" width="1" height="1" fill="#e0e0ea"/><rect x="5" y="5" width="1" height="1" fill="#000" fill-opacity="0.5"/><rect x="5" y="8" width="1" height="1" fill="#e0e0ea"/><rect x="5" y="7" width="1" height="1" fill="#000" fill-opacity="0.5"/><rect x="5" y="10" width="1" height="1" fill="#e0e0ea"/><rect x="5" y="9" width="1" height="1" fill="#000" fill-opacity="0.5"/><rect x="7" y="2" width="1" height="1" fill="#e0e0ea"/><rect x="7" y="1" width="1" height="1" fill="#000" fill-opacity="0.5"/><rect x="7" y="4" width="1" height="1" fill="#e0e0ea"/><rect x="7" y="3" width="1" height="1" fill="#000" fill-opacity="0.5"/><rect x="7" y="6" width="1" height="1" fill="#e0e0ea"/><rect x="7" y="5" width="1" height="1" fill="#000" fill-opacity="0.5"/><rect x="7" y="8" width="1" height="1" fill="#e0e0ea"/><rect x="7" y="7" width="1" height="1" fill="#000" fill-opacity="0.5"/><rect x="7" y="10" width="1" height="1" fill="#e0e0ea"/><rect x="7" y="9" width="1" height="1" fill="#000" fill-opacity="0.5"/><rect x="9" y="2" width="1" height="1" fill="#e0e0ea"/><rect x="9" y="1" width="1" height="1" fill="#000" fill-opacity="0.5"/><rect x="9" y="4" width="1" height="1" fill="#e0e0ea"/><rect x="9" y="3" width="1" height="1" fill="#000" fill-opacity="0.5"/><rect x="9" y="6" width="1" height="1" fill="#e0e0ea"/><rect x="9" y="5" width="1" height="1" fill="#000" fill-opacity="0.5"/><rect x="9" y="8" width="1" height="1" fill="#e0e0ea"/><rect x="9" y="7" width="1" height="1" fill="#000" fill-opacity="0.5"/><rect x="9" y="10" width="1" height="1" fill="#e0e0ea"/><rect x="9" y="9" width="1" height="1" fill="#000" fill-opacity="0.5"/></svg>
<div style="left:2px;top:121px;width:9px;height:9px;background:#000;"></div>
<div style="left:3px;top:122px;width:7px;height:7px;background:#e050f0;"></div>
<svg style="position:absolute;left:0;top:0" width="50" height="30" viewBox="6 0 50 30"><path d="M26.5 16.5 H41.5" stroke="#4cd391" stroke-width="1.1"/><path d="M28.4 12.3 L29.599999999999998 16.5 L28.4 20.4 L27.2 16.5Z" fill="#4cd391"/><path d="M32.4 10 L33.6 16.5 L32.4 21.8 L31.2 16.5Z" fill="#4cd391"/><path d="M36.4 12.3 L37.6 16.5 L36.4 20.4 L35.199999999999996 16.5Z" fill="#4cd391"/></svg>
<div class="t" style="left:40px;top:10px;font-size:11px;color:#a6a6a6;line-height:12px;letter-spacing:-0.45px">Track 3</div>
<div style="left:193px;top:6px;width:19px;height:20px;background:#222222;"></div>
<svg style="position:absolute;left:198px;top:12px" width="9" height="9" viewBox="0 0 9 9"><path d="M1.5 8 V1 H2.5 L4.5 4.5 L6.5 1 H7.5 V8" fill="none" stroke="#d8d8d8" stroke-width="1.1"/></svg>
<div style="left:215px;top:6px;width:19px;height:20px;background:#222222;"></div>
<svg style="position:absolute;left:220px;top:12px" width="9" height="9" viewBox="0 0 9 9"><path d="M7.4 1.5 H3.2 Q2.2 1.5 2.2 2.6 V3.4 Q2.2 4.5 3.2 4.5 H6.2 Q7.2 4.5 7.2 5.6 V6.4 Q7.2 7.5 6.2 7.5 H2" fill="none" stroke="#d8d8d8" stroke-width="1.1"/></svg>
<div style="left:237px;top:6px;width:19px;height:20px;background:#222222;"></div>
<svg style="position:absolute;left:242px;top:12px" width="9" height="9" viewBox="0 0 9 9"><path d="M1.5 8 V1.5 H5.5 Q6.8 1.5 6.8 2.8 V3.4 Q6.8 4.6 5.5 4.6 H1.5 M4.5 4.6 L7 8" fill="none" stroke="#d8d8d8" stroke-width="1.1"/></svg>
<div style="left:259px;top:6px;width:19px;height:20px;background:#222222;"></div>
<svg style="position:absolute;left:264px;top:12px" width="9" height="9" viewBox="0 0 9 9"><path d="M2.8 1.5 H6.2 M2.8 7.5 H6.2 M4.5 1.5 V7.5" fill="none" stroke="#9c9c9c" stroke-width="1.05"/></svg>
<svg style="position:absolute;left:17px;top:30px" width="17" height="16" viewBox="0 0 17 16"><rect x="0" y="13" width="1" height="2" fill="#d0d0d0"/><rect x="2" y="12" width="1" height="3" fill="#d0d0d0"/><rect x="4" y="11" width="1" height="4" fill="#d0d0d0"/><rect x="6" y="10" width="1" height="5" fill="#d0d0d0"/><rect x="8" y="9" width="1" height="6" fill="#d0d0d0"/><rect x="10" y="8" width="1" height="7" fill="#d0d0d0"/><rect x="12" y="5" width="1" height="10" fill="#d0d0d0"/><rect x="14" y="1" width="1" height="14" fill="#d0d0d0"/></svg>
<svg style="position:absolute;left:37px;top:30px" width="20" height="20" viewBox="0 0 20 20"><circle cx="9.6" cy="9.3" r="9.2" fill="#888888"/><path d="M9.6 9.3 V0.2" stroke="#000" stroke-width="1.2"/><circle cx="9.6" cy="9.3" r="2.1" fill="#000"/></svg>
<div class="t" style="left:60.5px;top:33px;font-size:11px;color:#3a9fe0;line-height:12px">+0</div>
<svg style="position:absolute;left:100px;top:30px" width="18" height="16" viewBox="0 0 18 16"><path d="M1.5 1.5 V14.5 M3.6 3.2 V12.5 M5.4 5 V11.5 M12.4 5 V11.5 M14.5 3.2 V12.5 M16.6 1.5 V14.5" stroke="#d0d0d0" stroke-width="1.1"/><path d="M6.5 7 L9 8.5 L11.5 7 V10.5 L9 9 L6.5 10.5Z" fill="#d0d0d0"/></svg>
<svg style="position:absolute;left:121px;top:30px" width="20" height="20" viewBox="0 0 20 20"><circle cx="9.4" cy="9.5" r="9.3" fill="#888888"/><path d="M9.4 9.5 V0.2" stroke="#000" stroke-width="1.2"/><circle cx="9.4" cy="9.5" r="2.1" fill="#000"/></svg>
<div class="t" style="left:143.8px;top:33px;font-size:11px;color:#3a9fe0;line-height:12px">0</div>
<div style="left:237px;top:30px;width:19px;height:19px;background:#222222;"></div>
<svg style="position:absolute;left:237px;top:30px" width="19" height="19" viewBox="0 0 19 19"><circle cx="9.5" cy="9.3" r="1.4" fill="#d0d0d0"/><path d="M7.3 6.6 A3.8 3.8 0 0 0 7.3 12 M11.7 6.6 A3.8 3.8 0 0 1 11.7 12 M5.4 4.4 A6.6 6.6 0 0 0 5.4 14.2 M13.6 4.4 A6.6 6.6 0 0 1 13.6 14.2" fill="none" stroke="#d0d0d0" stroke-width="1.15"/></svg>
<div style="left:261px;top:36px;width:15px;height:91px;background:#000;"></div>
<div style="left:261px;top:44px;width:15px;height:1px;background:#303030;"></div>
<div style="left:268px;top:36px;width:1px;height:8px;background:#303030;"></div>
<div style="left:261px;top:125px;width:7px;height:1px;background:#f0e800;"></div>
<div style="left:269px;top:125px;width:7px;height:1px;background:#f0e800;"></div>
<div style="left:16px;top:52px;width:240px;height:54px;background:#000;overflow:hidden">
<div style="left:1px;top:1px;width:238px;height:52px;background:#262626"></div>
<div class="t" style="left:7.5px;top:4px;font-size:14px;color:#c8c8c8;font-style:italic;line-height:16px;letter-spacing:-0.8px">fx</div>
<div style="left:23px;top:4px;width:17px;height:17px;background:#202020"></div>
<svg style="position:absolute;left:23px;top:4px" width="17" height="17" viewBox="0 0 17 17"><path d="M5.3 3.9 A5.1 5.1 0 1 0 11.7 3.9" fill="none" stroke="#cdcdcd" stroke-width="1.25"/><path d="M8.5 1.3 V7.5" stroke="#cdcdcd" stroke-width="1.25"/></svg>
<div style="left:43px;top:4px;width:17px;height:17px;background:#202020"></div>
<svg style="position:absolute;left:43px;top:4px" width="17" height="17" viewBox="0 0 17 17"><path d="M2 9 H7.5" stroke="#c8c8c8" stroke-width="1.2"/><path d="M6.5 6 L10 9 L6.5 12Z" fill="#c8c8c8"/><rect x="10.9" y="4" width="2" height="11" fill="#c8c8c8"/><rect x="10.2" y="5.5" width="3.4" height="3.5" rx="1.2" fill="#c8c8c8"/><circle cx="11.9" cy="7.2" r="0.7" fill="#232323"/></svg>
<div style="left:219px;top:4px;width:17px;height:17px;background:#202020"></div>
<svg style="position:absolute;left:219px;top:4px" width="17" height="17" viewBox="0 0 17 17"><path d="M11.8 2 L3.6 9.8 H8.3 L5.2 15.5 L13.4 7.5 H8.7Z" fill="#c8c8c8"/></svg>
<div style="left:1px;top:23px;width:238px;height:1px;background:#1e1e1e"></div>
<div style="left:1px;top:24px;width:238px;height:17px;background:#1e1e1e"></div>
<div style="left:2px;top:24px;width:18px;height:17px;background:#232323"></div>
<div style="left:21px;top:24px;width:2px;height:17px;background:#232323"></div>
<div style="left:40px;top:24px;width:166px;height:17px;background:#232323"></div>
<div class="t" style="left:9.5px;top:26px;font-size:11px;color:#a9a9a9;line-height:12px">1</div>
<div style="left:23px;top:24px;width:17px;height:17px;background:#232323"></div>
<svg style="position:absolute;left:23px;top:24px" width="17" height="17" viewBox="0 0 17 17"><path d="M5.3 3.9 A5.1 5.1 0 1 0 11.7 3.9" fill="none" stroke="#cdcdcd" stroke-width="1.25"/><path d="M8.5 1.3 V7.5" stroke="#cdcdcd" stroke-width="1.25"/></svg>
<div style="left:206px;top:24px;width:17px;height:17px;background:#262626"></div>
<svg style="position:absolute;left:206px;top:24px" width="17" height="17" viewBox="0 0 17 17"><path d="M6.5 4 L11 8.5 L6.5 13Z" fill="#bdbdbd"/></svg>
<div style="left:224px;top:24px;width:14px;height:15px;background:#2b2b2b"></div>
<div style="left:224px;top:39px;width:14px;height:15px;background:#1c1c1c"></div>
<div style="left:205px;top:24px;width:1px;height:29px;background:#1e1e1e"></div>
<div style="left:1px;top:41px;width:238px;height:1px;background:#202020"></div>
<div style="left:2px;top:42px;width:18px;height:11px;background:#232323"></div>
<div style="left:21px;top:42px;width:2px;height:11px;background:#232323"></div>
<div style="left:40px;top:42px;width:166px;height:11px;background:#232323"></div>
<div class="t" style="left:9.5px;top:45px;font-size:11px;color:#a9a9a9;line-height:12px">2</div>
<div style="left:23px;top:42px;width:17px;height:11px;background:#232323"></div>
<svg style="position:absolute;left:23px;top:42.5px" width="17" height="17" viewBox="0 0 17 17"><path d="M5.3 3.9 A5.1 5.1 0 1 0 11.7 3.9" fill="none" stroke="#cdcdcd" stroke-width="1.25"/><path d="M8.5 1.3 V7.5" stroke="#cdcdcd" stroke-width="1.25"/></svg>
<div style="left:206px;top:42px;width:17px;height:11px;background:#262626"></div>
<svg style="position:absolute;left:206px;top:42.5px" width="17" height="17" viewBox="0 0 17 17"><path d="M6.5 4 L11 8.5 L6.5 13Z" fill="#bdbdbd"/></svg>
<div style="left:239px;top:1px;width:1px;height:52px;background:#000"></div>
<div style="left:1px;top:53px;width:238px;height:1px;background:#000"></div>
</div>
<svg style="position:absolute;left:18px;top:112px" width="7" height="11" viewBox="0 0 7 11"><path d="M0.5 1 L5.5 5.5 L0.5 10Z" fill="#cfcfcf"/></svg>
<div style="left:34px;top:109px;width:222px;height:19px;background:#1f1f1f;"></div>
<div class="t" style="left:41px;top:114px;font-size:10.2px;color:#d8d8d8;line-height:12px;font-weight:bold;letter-spacing:-0.25px">Read</div>
</div>
<div style="left:6px;top:491px;width:282px;height:134px;overflow:hidden;background:#262626">
<div style="left:13px;top:0px;width:269px;height:1px;background:#2e2e2e;"></div>
<div style="left:13px;top:133px;width:269px;height:1px;background:#2e2e2e;"></div>
<div style="left:281px;top:0px;width:1px;height:134px;background:#2e2e2e;"></div>
<div style="left:13px;top:0px;width:1px;height:134px;background:#222222;"></div>
<div style="left:0px;top:0px;width:13px;height:134px;background:#4b6078;"></div>
<svg style="position:absolute;left:1px;top:4px" width="11" height="14" viewBox="0 0 11 14"><rect x="1" y="2" width="1" height="1" fill="#e0e0ea"/><rect x="1" y="1" width="1" height="1" fill="#000" fill-opacity="0.5"/><rect x="1" y="4" width="1" height="1" fill="#e0e0ea"/><rect x="1" y="3" width="1" height="1" fill="#000" fill-opacity="0.5"/><rect x="1" y="6" width="1" height="1" fill="#e0e0ea"/><rect x="1" y="5" width="1" height="1" fill="#000" fill-opacity="0.5"/><rect x="1" y="8" width="1" height="1" fill="#e0e0ea"/><rect x="1" y="7" width="1" height="1" fill="#000" fill-opacity="0.5"/><rect x="1" y="10" width="1" height="1" fill="#e0e0ea"/><rect x="1" y="9" width="1" height="1" fill="#000" fill-opacity="0.5"/><rect x="3" y="2" width="1" height="1" fill="#e0e0ea"/><rect x="3" y="1" width="1" height="1" fill="#000" fill-opacity="0.5"/><rect x="3" y="4" width="1" height="1" fill="#e0e0ea"/><rect x="3" y="3" width="1" height="1" fill="#000" fill-opacity="0.5"/><rect x="3" y="6" width="1" height="1" fill="#e0e0ea"/><rect x="3" y="5" width="1" height="1" fill="#000" fill-opacity="0.5"/><rect x="3" y="8" width="1" height="1" fill="#e0e0ea"/><rect x="3" y="7" width="1" height="1" fill="#000" fill-opacity="0.5"/><rect x="3" y="10" width="1" height="1" fill="#e0e0ea"/><rect x="3" y="9" width="1" height="1" fill="#000" fill-opacity="0.5"/><rect x="5" y="2" width="1" height="1" fill="#e0e0ea"/><rect x="5" y="1" width="1" height="1" fill="#000" fill-opacity="0.5"/><rect x="5" y="4" width="1" height="1" fill="#e0e0ea"/><rect x="5" y="3" width="1" height="1" fill="#000" fill-opacity="0.5"/><rect x="5" y="6" width="1" height="1" fill="#e0e0ea"/><rect x="5" y="5" width="1" height="1" fill="#000" fill-opacity="0.5"/><rect x="5" y="8" width="1" height="1" fill="#e0e0ea"/><rect x="5" y="7" width="1" height="1" fill="#000" fill-opacity="0.5"/><rect x="5" y="10" width="1" height="1" fill="#e0e0ea"/><rect x="5" y="9" width="1" height="1" fill="#000" fill-opacity="0.5"/><rect x="7" y="2" width="1" height="1" fill="#e0e0ea"/><rect x="7" y="1" width="1" height="1" fill="#000" fill-opacity="0.5"/><rect x="7" y="4" width="1" height="1" fill="#e0e0ea"/><rect x="7" y="3" width="1" height="1" fill="#000" fill-opacity="0.5"/><rect x="7" y="6" width="1" height="1" fill="#e0e0ea"/><rect x="7" y="5" width="1" height="1" fill="#000" fill-opacity="0.5"/><rect x="7" y="8" width="1" height="1" fill="#e0e0ea"/><rect x="7" y="7" width="1" height="1" fill="#000" fill-opacity="0.5"/><rect x="7" y="10" width="1" height="1" fill="#e0e0ea"/><rect x="7" y="9" width="1" height="1" fill="#000" fill-opacity="0.5"/><rect x="9" y="2" width="1" height="1" fill="#e0e0ea"/><rect x="9" y="1" width="1" height="1" fill="#000" fill-opacity="0.5"/><rect x="9" y="4" width="1" height="1" fill="#e0e0ea"/><rect x="9" y="3" width="1" height="1" fill="#000" fill-opacity="0.5"/><rect x="9" y="6" width="1" height="1" fill="#e0e0ea"/><rect x="9" y="5" width="1" height="1" fill="#000" fill-opacity="0.5"/><rect x="9" y="8" width="1" height="1" fill="#e0e0ea"/><rect x="9" y="7" width="1" height="1" fill="#000" fill-opacity="0.5"/><rect x="9" y="10" width="1" height="1" fill="#e0e0ea"/><rect x="9" y="9" width="1" height="1" fill="#000" fill-opacity="0.5"/></svg>
<div style="left:2px;top:121px;width:9px;height:9px;background:#000;"></div>
<div style="left:3px;top:122px;width:7px;height:7px;background:#55aaf5;"></div>
<svg style="position:absolute;left:0;top:0" width="50" height="30" viewBox="6 0 50 30"><path d="M26.5 16.5 H41.5" stroke="#4cd391" stroke-width="1.1"/><path d="M28.4 12.3 L29.599999999999998 16.5 L28.4 20.4 L27.2 16.5Z" fill="#4cd391"/><path d="M32.4 10 L33.6 16.5 L32.4 21.8 L31.2 16.5Z" fill="#4cd391"/><path d="M36.4 12.3 L37.6 16.5 L36.4 20.4 L35.199999999999996 16.5Z" fill="#4cd391"/></svg>
<div class="t" style="left:40px;top:10px;font-size:11px;color:#a6a6a6;line-height:12px;letter-spacing:-0.45px">Track 4</div>
<div style="left:193px;top:6px;width:19px;height:20px;background:#222222;"></div>
<svg style="position:absolute;left:198px;top:12px" width="9" height="9" viewBox="0 0 9 9"><path d="M1.5 8 V1 H2.5 L4.5 4.5 L6.5 1 H7.5 V8" fill="none" stroke="#d8d8d8" stroke-width="1.1"/></svg>
<div style="left:215px;top:6px;width:19px;height:20px;background:#222222;"></div>
<svg style="position:absolute;left:220px;top:12px" width="9" height="9" viewBox="0 0 9 9"><path d="M7.4 1.5 H3.2 Q2.2 1.5 2.2 2.6 V3.4 Q2.2 4.5 3.2 4.5 H6.2 Q7.2 4.5 7.2 5.6 V6.4 Q7.2 7.5 6.2 7.5 H2" fill="none" stroke="#d8d8d8" stroke-width="1.1"/></svg>
<div style="left:237px;top:6px;width:19px;height:20px;background:#222222;"></div>
<svg style="position:absolute;left:242px;top:12px" width="9" height="9" viewBox="0 0 9 9"><path d="M1.5 8 V1.5 H5.5 Q6.8 1.5 6.8 2.8 V3.4 Q6.8 4.6 5.5 4.6 H1.5 M4.5 4.6 L7 8" fill="none" stroke="#d8d8d8" stroke-width="1.1"/></svg>
<div style="left:259px;top:6px;width:19px;height:20px;background:#222222;"></div>
<svg style="position:absolute;left:264px;top:12px" width="9" height="9" viewBox="0 0 9 9"><path d="M2.8 1.5 H6.2 M2.8 7.5 H6.2 M4.5 1.5 V7.5" fill="none" stroke="#9c9c9c" stroke-width="1.05"/></svg>
<svg style="position:absolute;left:17px;top:30px" width="17" height="16" viewBox="0 0 17 16"><rect x="0" y="13" width="1" height="2" fill="#d0d0d0"/><rect x="2" y="12" width="1" height="3" fill="#d0d0d0"/><rect x="4" y="11" width="1" height="4" fill="#d0d0d0"/><rect x="6" y="10" width="1" height="5" fill="#d0d0d0"/><rect x="8" y="9" width="1" height="6" fill="#d0d0d0"/><rect x="10" y="8" width="1" height="7" fill="#d0d0d0"/><rect x="12" y="5" width="1" height="10" fill="#d0d0d0"/><rect x="14" y="1" width="1" height="14" fill="#d0d0d0"/></svg>
<svg style="position:absolute;left:37px;top:30px" width="20" height="20" viewBox="0 0 20 20"><circle cx="9.6" cy="9.3" r="9.2" fill="#888888"/><path d="M9.6 9.3 V0.2" stroke="#000" stroke-width="1.2"/><circle cx="9.6" cy="9.3" r="2.1" fill="#000"/></svg>
<div class="t" style="left:60.5px;top:33px;font-size:11px;color:#3a9fe0;line-height:12px">+0</div>
<svg style="position:absolute;left:100px;top:30px" width="18" height="16" viewBox="0 0 18 16"><path d="M1.5 1.5 V14.5 M3.6 3.2 V12.5 M5.4 5 V11.5 M12.4 5 V11.5 M14.5 3.2 V12.5 M16.6 1.5 V14.5" stroke="#d0d0d0" stroke-width="1.1"/><path d="M6.5 7 L9 8.5 L11.5 7 V10.5 L9 9 L6.5 10.5Z" fill="#d0d0d0"/></svg>
<svg style="position:absolute;left:121px;top:30px" width="20" height="20" viewBox="0 0 20 20"><circle cx="9.4" cy="9.5" r="9.3" fill="#888888"/><path d="M9.4 9.5 V0.2" stroke="#000" stroke-width="1.2"/><circle cx="9.4" cy="9.5" r="2.1" fill="#000"/></svg>
<div class="t" style="left:143.8px;top:33px;font-size:11px;color:#3a9fe0;line-height:12px">0</div>
<div style="left:237px;top:30px;width:19px;height:19px;background:#222222;"></div>
<svg style="position:absolute;left:237px;top:30px" width="19" height="19" viewBox="0 0 19 19"><circle cx="9.5" cy="9.3" r="1.4" fill="#d0d0d0"/><path d="M7.3 6.6 A3.8 3.8 0 0 0 7.3 12 M11.7 6.6 A3.8 3.8 0 0 1 11.7 12 M5.4 4.4 A6.6 6.6 0 0 0 5.4 14.2 M13.6 4.4 A6.6 6.6 0 0 1 13.6 14.2" fill="none" stroke="#d0d0d0" stroke-width="1.15"/></svg>
<div style="left:261px;top:36px;width:15px;height:91px;background:#000;"></div>
<div style="left:261px;top:44px;width:15px;height:1px;background:#303030;"></div>
<div style="left:268px;top:36px;width:1px;height:8px;background:#303030;"></div>
<div style="left:261px;top:125px;width:7px;height:1px;background:#f0e800;"></div>
<div style="left:269px;top:125px;width:7px;height:1px;background:#f0e800;"></div>
<div style="left:16px;top:52px;width:240px;height:54px;background:#000;overflow:hidden">
<div style="left:1px;top:1px;width:238px;height:52px;background:#262626"></div>
<div class="t" style="left:7.5px;top:4px;font-size:14px;color:#c8c8c8;font-style:italic;line-height:16px;letter-spacing:-0.8px">fx</div>
<div style="left:23px;top:4px;width:17px;height:17px;background:#202020"></div>
<svg style="position:absolute;left:23px;top:4px" width="17" height="17" viewBox="0 0 17 17"><path d="M5.3 3.9 A5.1 5.1 0 1 0 11.7 3.9" fill="none" stroke="#cdcdcd" stroke-width="1.25"/><path d="M8.5 1.3 V7.5" stroke="#cdcdcd" stroke-width="1.25"/></svg>
<div style="left:43px;top:4px;width:17px;height:17px;background:#202020"></div>
<svg style="position:absolute;left:43px;top:4px" width="17" height="17" viewBox="0 0 17 17"><path d="M2 9 H7.5" stroke="#c8c8c8" stroke-width="1.2"/><path d="M6.5 6 L10 9 L6.5 12Z" fill="#c8c8c8"/><rect x="10.9" y="4" width="2" height="11" fill="#c8c8c8"/><rect x="10.2" y="5.5" width="3.4" height="3.5" rx="1.2" fill="#c8c8c8"/><circle cx="11.9" cy="7.2" r="0.7" fill="#232323"/></svg>
<div style="left:219px;top:4px;width:17px;height:17px;background:#202020"></div>
<svg style="position:absolute;left:219px;top:4px" width="17" height="17" viewBox="0 0 17 17"><path d="M11.8 2 L3.6 9.8 H8.3 L5.2 15.5 L13.4 7.5 H8.7Z" fill="#c8c8c8"/></svg>
<div style="left:1px;top:23px;width:238px;height:1px;background:#1e1e1e"></div>
<div style="left:1px;top:24px;width:238px;height:17px;background:#1e1e1e"></div>
<div style="left:2px;top:24px;width:18px;height:17px;background:#232323"></div>
<div style="left:21px;top:24px;width:2px;height:17px;background:#232323"></div>
<div style="left:40px;top:24px;width:166px;height:17px;background:#232323"></div>
<div class="t" style="left:9.5px;top:26px;font-size:11px;color:#a9a9a9;line-height:12px">1</div>
<div style="left:23px;top:24px;width:17px;height:17px;background:#232323"></div>
<svg style="position:absolute;left:23px;top:24px" width="17" height="17" viewBox="0 0 17 17"><path d="M5.3 3.9 A5.1 5.1 0 1 0 11.7 3.9" fill="none" stroke="#cdcdcd" stroke-width="1.25"/><path d="M8.5 1.3 V7.5" stroke="#cdcdcd" stroke-width="1.25"/></svg>
<div style="left:206px;top:24px;width:17px;height:17px;background:#262626"></div>
<svg style="position:absolute;left:206px;top:24px" width="17" height="17" viewBox="0 0 17 17"><path d="M6.5 4 L11 8.5 L6.5 13Z" fill="#bdbdbd"/></svg>
<div style="left:224px;top:24px;width:14px;height:15px;background:#2b2b2b"></div>
<div style="left:224px;top:39px;width:14px;height:15px;background:#1c1c1c"></div>
<div style="left:205px;top:24px;width:1px;height:29px;background:#1e1e1e"></div>
<div style="left:1px;top:41px;width:238px;height:1px;background:#202020"></div>
<div style="left:2px;top:42px;width:18px;height:11px;background:#232323"></div>
<div style="left:21px;top:42px;width:2px;height:11px;background:#232323"></div>
<div style="left:40px;top:42px;width:166px;height:11px;background:#232323"></div>
<div class="t" style="left:9.5px;top:45px;font-size:11px;color:#a9a9a9;line-height:12px">2</div>
<div style="left:23px;top:42px;width:17px;height:11px;background:#232323"></div>
<svg style="position:absolute;left:23px;top:42.5px" width="17" height="17" viewBox="0 0 17 17"><path d="M5.3 3.9 A5.1 5.1 0 1 0 11.7 3.9" fill="none" stroke="#cdcdcd" stroke-width="1.25"/><path d="M8.5 1.3 V7.5" stroke="#cdcdcd" stroke-width="1.25"/></svg>
<div style="left:206px;top:42px;width:17px;height:11px;background:#262626"></div>
<svg style="position:absolute;left:206px;top:42.5px" width="17" height="17" viewBox="0 0 17 17"><path d="M6.5 4 L11 8.5 L6.5 13Z" fill="#bdbdbd"/></svg>
<div style="left:239px;top:1px;width:1px;height:52px;background:#000"></div>
<div style="left:1px;top:53px;width:238px;height:1px;background:#000"></div>
</div>
<svg style="position:absolute;left:18px;top:112px" width="7" height="11" viewBox="0 0 7 11"><path d="M0.5 1 L5.5 5.5 L0.5 10Z" fill="#cfcfcf"/></svg>
<div style="left:34px;top:109px;width:222px;height:19px;background:#1f1f1f;"></div>
<div class="t" style="left:41px;top:114px;font-size:10.2px;color:#d8d8d8;line-height:12px;font-weight:bold;letter-spacing:-0.25px">Read</div>
<svg style="position:absolute;left:241px;top:115.5px" width="11" height="7" viewBox="0 0 11 7"><path d="M0.5 0.5 H10 L5.25 5.5Z" fill="#d0d0d0"/></svg>
</div>
<div style="left:6px;top:628px;width:282px;height:134px;overflow:hidden;background:#262626">
<div style="left:13px;top:0px;width:269px;height:1px;background:#2e2e2e;"></div>
<div style="left:13px;top:133px;width:269px;height:1px;background:#2e2e2e;"></div>
<div style="left:281px;top:0px;width:1px;height:134px;background:#2e2e2e;"></div>
<div style="left:13px;top:0px;width:1px;height:134px;background:#222222;"></div>
<div style="left:0px;top:0px;width:13px;height:134px;background:#687a4b;"></div>
<svg style="position:absolute;left:1px;top:4px" width="11" height="14" viewBox="0 0 11 14"><rect x="1" y="2" width="1" height="1" fill="#e0e0ea"/><rect x="1" y="1" width="1" height="1" fill="#000" fill-opacity="0.5"/><rect x="1" y="4" width="1" height="1" fill="#e0e0ea"/><rect x="1" y="3" width="1" height="1" fill="#000" fill-opacity="0.5"/><rect x="1" y="6" width="1" height="1" fill="#e0e0ea"/><rect x="1" y="5" width="1" height="1" fill="#000" fill-opacity="0.5"/><rect x="1" y="8" width="1" height="1" fill="#e0e0ea"/><rect x="1" y="7" width="1" height="1" fill="#000" fill-opacity="0.5"/><rect x="1" y="10" width="1" height="1" fill="#e0e0ea"/><rect x="1" y="9" width="1" height="1" fill="#000" fill-opacity="0.5"/><rect x="3" y="2" width="1" height="1" fill="#e0e0ea"/><rect x="3" y="1" width="1" height="1" fill="#000" fill-opacity="0.5"/><rect x="3" y="4" width="1" height="1" fill="#e0e0ea"/><rect x="3" y="3" width="1" height="1" fill="#000" fill-opacity="0.5"/><rect x="3" y="6" width="1" height="1" fill="#e0e0ea"/><rect x="3" y="5" width="1" height="1" fill="#000" fill-opacity="0.5"/><rect x="3" y="8" width="1" height="1" fill="#e0e0ea"/><rect x="3" y="7" width="1" height="1" fill="#000" fill-opacity="0.5"/><rect x="3" y="10" width="1" height="1" fill="#e0e0ea"/><rect x="3" y="9" width="1" height="1" fill="#000" fill-opacity="0.5"/><rect x="5" y="2" width="1" height="1" fill="#e0e0ea"/><rect x="5" y="1" width="1" height="1" fill="#000" fill-opacity="0.5"/><rect x="5" y="4" width="1" height="1" fill="#e0e0ea"/><rect x="5" y="3" width="1" height="1" fill="#000" fill-opacity="0.5"/><rect x="5" y="6" width="1" height="1" fill="#e0e0ea"/><rect x="5" y="5" width="1" height="1" fill="#000" fill-opacity="0.5"/><rect x="5" y="8" width="1" height="1" fill="#e0e0ea"/><rect x="5" y="7" width="1" height="1" fill="#000" fill-opacity="0.5"/><rect x="5" y="10" width="1" height="1" fill="#e0e0ea"/><rect x="5" y="9" width="1" height="1" fill="#000" fill-opacity="0.5"/><rect x="7" y="2" width="1" height="1" fill="#e0e0ea"/><rect x="7" y="1" width="1" height="1" fill="#000" fill-opacity="0.5"/><rect x="7" y="4" width="1" height="1" fill="#e0e0ea"/><rect x="7" y="3" width="1" height="1" fill="#000" fill-opacity="0.5"/><rect x="7" y="6" width="1" height="1" fill="#e0e0ea"/><rect x="7" y="5" width="1" height="1" fill="#000" fill-opacity="0.5"/><rect x="7" y="8" width="1" height="1" fill="#e0e0ea"/><rect x="7" y="7" width="1" height="1" fill="#000" fill-opacity="0.5"/><rect x="7" y="10" width="1" height="1" fill="#e0e0ea"/><rect x="7" y="9" width="1" height="1" fill="#000" fill-opacity="0.5"/><rect x="9" y="2" width="1" height="1" fill="#e0e0ea"/><rect x="9" y="1" width="1" height="1" fill="#000" fill-opacity="0.5"/><rect x="9" y="4" width="1" height="1" fill="#e0e0ea"/><rect x="9" y="3" width="1" height="1" fill="#000" fill-opacity="0.5"/><rect x="9" y="6" width="1" height="1" fill="#e0e0ea"/><rect x="9" y="5" width="1" height="1" fill="#000" fill-opacity="0.5"/><rect x="9" y="8" width="1" height="1" fill="#e0e0ea"/><rect x="9" y="7" width="1" height="1" fill="#000" fill-opacity="0.5"/><rect x="9" y="10" width="1" height="1" fill="#e0e0ea"/><rect x="9" y="9" width="1" height="1" fill="#000" fill-opacity="0.5"/></svg>
<div style="left:2px;top:121px;width:9px;height:9px;background:#000;"></div>
<div style="left:3px;top:122px;width:7px;height:7px;background:#b8f040;"></div>
<svg style="position:absolute;left:0;top:0" width="50" height="30" viewBox="6 0 50 30"><path d="M26.5 16.5 H41.5" stroke="#4cd391" stroke-width="1.1"/><path d="M28.4 12.3 L29.599999999999998 16.5 L28.4 20.4 L27.2 16.5Z" fill="#4cd391"/><path d="M32.4 10 L33.6 16.5 L32.4 21.8 L31.2 16.5Z" fill="#4cd391"/><path d="M36.4 12.3 L37.6 16.5 L36.4 20.4 L35.199999999999996 16.5Z" fill="#4cd391"/></svg>
<div class="t" style="left:40px;top:10px;font-size:11px;color:#a6a6a6;line-height:12px;letter-spacing:-0.45px">Track 5</div>
<div style="left:193px;top:6px;width:19px;height:20px;background:#222222;"></div>
<svg style="position:absolute;left:198px;top:12px" width="9" height="9" viewBox="0 0 9 9"><path d="M1.5 8 V1 H2.5 L4.5 4.5 L6.5 1 H7.5 V8" fill="none" stroke="#d8d8d8" stroke-width="1.1"/></svg>
<div style="left:215px;top:6px;width:19px;height:20px;background:#222222;"></div>
<svg style="position:absolute;left:220px;top:12px" width="9" height="9" viewBox="0 0 9 9"><path d="M7.4 1.5 H3.2 Q2.2 1.5 2.2 2.6 V3.4 Q2.2 4.5 3.2 4.5 H6.2 Q7.2 4.5 7.2 5.6 V6.4 Q7.2 7.5 6.2 7.5 H2" fill="none" stroke="#d8d8d8" stroke-width="1.1"/></svg>
<div style="left:237px;top:6px;width:19px;height:20px;background:#222222;"></div>
<svg style="position:absolute;left:242px;top:12px" width="9" height="9" viewBox="0 0 9 9"><path d="M1.5 8 V1.5 H5.5 Q6.8 1.5 6.8 2.8 V3.4 Q6.8 4.6 5.5 4.6 H1.5 M4.5 4.6 L7 8" fill="none" stroke="#d8d8d8" stroke-width="1.1"/></svg>
<div style="left:259px;top:6px;width:19px;height:20px;background:#222222;"></div>
<svg style="position:absolute;left:264px;top:12px" width="9" height="9" viewBox="0 0 9 9"><path d="M2.8 1.5 H6.2 M2.8 7.5 H6.2 M4.5 1.5 V7.5" fill="none" stroke="#9c9c9c" stroke-width="1.05"/></svg>
<svg style="position:absolute;left:17px;top:30px" width="17" height="16" viewBox="0 0 17 16"><rect x="0" y="13" width="1" height="2" fill="#d0d0d0"/><rect x="2" y="12" width="1" height="3" fill="#d0d0d0"/><rect x="4" y="11" width="1" height="4" fill="#d0d0d0"/><rect x="6" y="10" width="1" height="5" fill="#d0d0d0"/><rect x="8" y="9" width="1" height="6" fill="#d0d0d0"/><rect x="10" y="8" width="1" height="7" fill="#d0d0d0"/><rect x="12" y="5" width="1" height="10" fill="#d0d0d0"/><rect x="14" y="1" width="1" height="14" fill="#d0d0d0"/></svg>
<svg style="position:absolute;left:37px;top:30px" width="20" height="20" viewBox="0 0 20 20"><circle cx="9.6" cy="9.3" r="9.2" fill="#888888"/><path d="M9.6 9.3 V0.2" stroke="#000" stroke-width="1.2"/><circle cx="9.6" cy="9.3" r="2.1" fill="#000"/></svg>
<div class="t" style="left:60.5px;top:33px;font-size:11px;color:#3a9fe0;line-height:12px">+0</div>
<svg style="position:absolute;left:100px;top:30px" width="18" height="16" viewBox="0 0 18 16"><path d="M1.5 1.5 V14.5 M3.6 3.2 V12.5 M5.4 5 V11.5 M12.4 5 V11.5 M14.5 3.2 V12.5 M16.6 1.5 V14.5" stroke="#d0d0d0" stroke-width="1.1"/><path d="M6.5 7 L9 8.5 L11.5 7 V10.5 L9 9 L6.5 10.5Z" fill="#d0d0d0"/></svg>
<svg style="position:absolute;left:121px;top:30px" width="20" height="20" viewBox="0 0 20 20"><circle cx="9.4" cy="9.5" r="9.3" fill="#888888"/><path d="M9.4 9.5 V0.2" stroke="#000" stroke-width="1.2"/><circle cx="9.4" cy="9.5" r="2.1" fill="#000"/></svg>
<div class="t" style="left:143.8px;top:33px;font-size:11px;color:#3a9fe0;line-height:12px">0</div>
<div style="left:237px;top:30px;width:19px;height:19px;background:#222222;"></div>
<svg style="position:absolute;left:237px;top:30px" width="19" height="19" viewBox="0 0 19 19"><circle cx="9.5" cy="9.3" r="1.4" fill="#d0d0d0"/><path d="M7.3 6.6 A3.8 3.8 0 0 0 7.3 12 M11.7 6.6 A3.8 3.8 0 0 1 11.7 12 M5.4 4.4 A6.6 6.6 0 0 0 5.4 14.2 M13.6 4.4 A6.6 6.6 0 0 1 13.6 14.2" fill="none" stroke="#d0d0d0" stroke-width="1.15"/></svg>
<div style="left:261px;top:36px;width:15px;height:91px;background:#000;"></div>
<div style="left:261px;top:44px;width:15px;height:1px;background:#303030;"></div>
<div style="left:268px;top:36px;width:1px;height:8px;background:#303030;"></div>
<div style="left:261px;top:125px;width:7px;height:1px;background:#f0e800;"></div>
<div style="left:269px;top:125px;width:7px;height:1px;background:#f0e800;"></div>
<div style="left:16px;top:52px;width:240px;height:54px;background:#000;overflow:hidden">
<div style="left:1px;top:1px;width:238px;height:52px;background:#262626"></div>
<div class="t" style="left:7.5px;top:4px;font-size:14px;color:#c8c8c8;font-style:italic;line-height:16px;letter-spacing:-0.8px">fx</div>
<div style="left:23px;top:4px;width:17px;height:17px;background:#202020"></div>
<svg style="position:absolute;left:23px;top:4px" width="17" height="17" viewBox="0 0 17 17"><path d="M5.3 3.9 A5.1 5.1 0 1 0 11.7 3.9" fill="none" stroke="#cdcdcd" stroke-width="1.25"/><path d="M8.5 1.3 V7.5" stroke="#cdcdcd" stroke-width="1.25"/></svg>
<div style="left:43px;top:4px;width:17px;height:17px;background:#202020"></div>
<svg style="position:absolute;left:43px;top:4px" width="17" height="17" viewBox="0 0 17 17"><path d="M2 9 H7.5" stroke="#c8c8c8" stroke-width="1.2"/><path d="M6.5 6 L10 9 L6.5 12Z" fill="#c8c8c8"/><rect x="10.9" y="4" width="2" height="11" fill="#c8c8c8"/><rect x="10.2" y="5.5" width="3.4" height="3.5" rx="1.2" fill="#c8c8c8"/><circle cx="11.9" cy="7.2" r="0.7" fill="#232323"/></svg>
<div style="left:219px;top:4px;width:17px;height:17px;background:#202020"></div>
<svg style="position:absolute;left:219px;top:4px" width="17" height="17" viewBox="0 0 17 17"><path d="M11.8 2 L3.6 9.8 H8.3 L5.2 15.5 L13.4 7.5 H8.7Z" fill="#c8c8c8"/></svg>
<div style="left:1px;top:23px;width:238px;height:1px;background:#1e1e1e"></div>
<div style="left:1px;top:24px;width:238px;height:17px;background:#1e1e1e"></div>
<div style="left:2px;top:24px;width:18px;height:17px;background:#232323"></div>
<div style="left:21px;top:24px;width:2px;height:17px;background:#232323"></div>
<div style="left:40px;top:24px;width:166px;height:17px;background:#232323"></div>
<div class="t" style="left:9.5px;top:26px;font-size:11px;color:#a9a9a9;line-height:12px">1</div>
<div style="left:23px;top:24px;width:17px;height:17px;background:#232323"></div>
<svg style="position:absolute;left:23px;top:24px" width="17" height="17" viewBox="0 0 17 17"><path d="M5.3 3.9 A5.1 5.1 0 1 0 11.7 3.9" fill="none" stroke="#cdcdcd" stroke-width="1.25"/><path d="M8.5 1.3 V7.5" stroke="#cdcdcd" stroke-width="1.25"/></svg>
<div style="left:206px;top:24px;width:17px;height:17px;background:#262626"></div>
<svg style="position:absolute;left:206px;top:24px" width="17" height="17" viewBox="0 0 17 17"><path d="M6.5 4 L11 8.5 L6.5 13Z" fill="#bdbdbd"/></svg>
<div style="left:224px;top:24px;width:14px;height:15px;background:#2b2b2b"></div>
<div style="left:224px;top:39px;width:14px;height:15px;background:#1c1c1c"></div>
<div style="left:205px;top:24px;width:1px;height:29px;background:#1e1e1e"></div>
<div style="left:1px;top:41px;width:238px;height:1px;background:#202020"></div>
<div style="left:2px;top:42px;width:18px;height:11px;background:#232323"></div>
<div style="left:21px;top:42px;width:2px;height:11px;background:#232323"></div>
<div style="left:40px;top:42px;width:166px;height:11px;background:#232323"></div>
<div class="t" style="left:9.5px;top:45px;font-size:11px;color:#a9a9a9;line-height:12px">2</div>
<div style="left:23px;top:42px;width:17px;height:11px;background:#232323"></div>
<svg style="position:absolute;left:23px;top:42.5px" width="17" height="17" viewBox="0 0 17 17"><path d="M5.3 3.9 A5.1 5.1 0 1 0 11.7 3.9" fill="none" stroke="#cdcdcd" stroke-width="1.25"/><path d="M8.5 1.3 V7.5" stroke="#cdcdcd" stroke-width="1.25"/></svg>
<div style="left:206px;top:42px;width:17px;height:11px;background:#262626"></div>
<svg style="position:absolute;left:206px;top:42.5px" width="17" height="17" viewBox="0 0 17 17"><path d="M6.5 4 L11 8.5 L6.5 13Z" fill="#bdbdbd"/></svg>
<div style="left:239px;top:1px;width:1px;height:52px;background:#000"></div>
<div style="left:1px;top:53px;width:238px;height:1px;background:#000"></div>
</div>
<svg style="position:absolute;left:18px;top:112px" width="7" height="11" viewBox="0 0 7 11"><path d="M0.5 1 L5.5 5.5 L0.5 10Z" fill="#cfcfcf"/></svg>
<div style="left:34px;top:109px;width:222px;height:19px;background:#1f1f1f;"></div>
<div class="t" style="left:41px;top:114px;font-size:10.2px;color:#d8d8d8;line-height:12px;font-weight:bold;letter-spacing:-0.25px">Read</div>
<svg style="position:absolute;left:241px;top:115.5px" width="11" height="7" viewBox="0 0 11 7"><path d="M0.5 0.5 H10 L5.25 5.5Z" fill="#d0d0d0"/></svg>
</div>
<div style="left:6px;top:765px;width:282px;height:24px;overflow:hidden;background:#262626">
<div style="left:13px;top:0px;width:269px;height:1px;background:#2e2e2e;"></div>
<div style="left:13px;top:133px;width:269px;height:1px;background:#2e2e2e;"></div>
<div style="left:281px;top:0px;width:1px;height:134px;background:#2e2e2e;"></div>
<div style="left:13px;top:0px;width:1px;height:134px;background:#222222;"></div>
<div style="left:0px;top:0px;width:13px;height:134px;background:#4f4f82;"></div>
<svg style="position:absolute;left:1px;top:4px" width="11" height="14" viewBox="0 0 11 14"><rect x="1" y="2" width="1" height="1" fill="#e0e0ea"/><rect x="1" y="1" width="1" height="1" fill="#000" fill-opacity="0.5"/><rect x="1" y="4" width="1" height="1" fill="#e0e0ea"/><rect x="1" y="3" width="1" height="1" fill="#000" fill-opacity="0.5"/><rect x="1" y="6" width="1" height="1" fill="#e0e0ea"/><rect x="1" y="5" width="1" height="1" fill="#000" fill-opacity="0.5"/><rect x="1" y="8" width="1" height="1" fill="#e0e0ea"/><rect x="1" y="7" width="1" height="1" fill="#000" fill-opacity="0.5"/><rect x="1" y="10" width="1" height="1" fill="#e0e0ea"/><rect x="1" y="9" width="1" height="1" fill="#000" fill-opacity="0.5"/><rect x="3" y="2" width="1" height="1" fill="#e0e0ea"/><rect x="3" y="1" width="1" height="1" fill="#000" fill-opacity="0.5"/><rect x="3" y="4" width="1" height="1" fill="#e0e0ea"/><rect x="3" y="3" width="1" height="1" fill="#000" fill-opacity="0.5"/><rect x="3" y="6" width="1" height="1" fill="#e0e0ea"/><rect x="3" y="5" width="1" height="1" fill="#000" fill-opacity="0.5"/><rect x="3" y="8" width="1" height="1" fill="#e0e0ea"/><rect x="3" y="7" width="1" height="1" fill="#000" fill-opacity="0.5"/><rect x="3" y="10" width="1" height="1" fill="#e0e0ea"/><rect x="3" y="9" width="1" height="1" fill="#000" fill-opacity="0.5"/><rect x="5" y="2" width="1" height="1" fill="#e0e0ea"/><rect x="5" y="1" width="1" height="1" fill="#000" fill-opacity="0.5"/><rect x="5" y="4" width="1" height="1" fill="#e0e0ea"/><rect x="5" y="3" width="1" height="1" fill="#000" fill-opacity="0.5"/><rect x="5" y="6" width="1" height="1" fill="#e0e0ea"/><rect x="5" y="5" width="1" height="1" fill="#000" fill-opacity="0.5"/><rect x="5" y="8" width="1" height="1" fill="#e0e0ea"/><rect x="5" y="7" width="1" height="1" fill="#000" fill-opacity="0.5"/><rect x="5" y="10" width="1" height="1" fill="#e0e0ea"/><rect x="5" y="9" width="1" height="1" fill="#000" fill-opacity="0.5"/><rect x="7" y="2" width="1" height="1" fill="#e0e0ea"/><rect x="7" y="1" width="1" height="1" fill="#000" fill-opacity="0.5"/><rect x="7" y="4" width="1" height="1" fill="#e0e0ea"/><rect x="7" y="3" width="1" height="1" fill="#000" fill-opacity="0.5"/><rect x="7" y="6" width="1" height="1" fill="#e0e0ea"/><rect x="7" y="5" width="1" height="1" fill="#000" fill-opacity="0.5"/><rect x="7" y="8" width="1" height="1" fill="#e0e0ea"/><rect x="7" y="7" width="1" height="1" fill="#000" fill-opacity="0.5"/><rect x="7" y="10" width="1" height="1" fill="#e0e0ea"/><rect x="7" y="9" width="1" height="1" fill="#000" fill-opacity="0.5"/><rect x="9" y="2" width="1" height="1" fill="#e0e0ea"/><rect x="9" y="1" width="1" height="1" fill="#000" fill-opacity="0.5"/><rect x="9" y="4" width="1" height="1" fill="#e0e0ea"/><rect x="9" y="3" width="1" height="1" fill="#000" fill-opacity="0.5"/><rect x="9" y="6" width="1" height="1" fill="#e0e0ea"/><rect x="9" y="5" width="1" height="1" fill="#000" fill-opacity="0.5"/><rect x="9" y="8" width="1" height="1" fill="#e0e0ea"/><rect x="9" y="7" width="1" height="1" fill="#000" fill-opacity="0.5"/><rect x="9" y="10" width="1" height="1" fill="#e0e0ea"/><rect x="9" y="9" width="1" height="1" fill="#000" fill-opacity="0.5"/></svg>
<div style="left:2px;top:121px;width:9px;height:9px;background:#000;"></div>
<div style="left:3px;top:122px;width:7px;height:7px;background:#4f4f82;"></div>
<svg style="position:absolute;left:0;top:0" width="50" height="30" viewBox="6 0 50 30"><path d="M26.5 16.5 H41.5" stroke="#4cd391" stroke-width="1.1"/><path d="M28.4 12.3 L29.599999999999998 16.5 L28.4 20.4 L27.2 16.5Z" fill="#4cd391"/><path d="M32.4 10 L33.6 16.5 L32.4 21.8 L31.2 16.5Z" fill="#4cd391"/><path d="M36.4 12.3 L37.6 16.5 L36.4 20.4 L35.199999999999996 16.5Z" fill="#4cd391"/></svg>
<div class="t" style="left:40px;top:10px;font-size:11px;color:#a6a6a6;line-height:12px;letter-spacing:-0.45px">Track 6</div>
<div style="left:193px;top:6px;width:19px;height:20px;background:#222222;"></div>
<svg style="position:absolute;left:198px;top:12px" width="9" height="9" viewBox="0 0 9 9"><path d="M1.5 8 V1 H2.5 L4.5 4.5 L6.5 1 H7.5 V8" fill="none" stroke="#d8d8d8" stroke-width="1.1"/></svg>
<div style="left:215px;top:6px;width:19px;height:20px;background:#222222;"></div>
<svg style="position:absolute;left:220px;top:12px" width="9" height="9" viewBox="0 0 9 9"><path d="M7.4 1.5 H3.2 Q2.2 1.5 2.2 2.6 V3.4 Q2.2 4.5 3.2 4.5 H6.2 Q7.2 4.5 7.2 5.6 V6.4 Q7.2 7.5 6.2 7.5 H2" fill="none" stroke="#d8d8d8" stroke-width="1.1"/></svg>
<div style="left:237px;top:6px;width:19px;height:20px;background:#222222;"></div>
<svg style="position:absolute;left:242px;top:12px" width="9" height="9" viewBox="0 0 9 9"><path d="M1.5 8 V1.5 H5.5 Q6.8 1.5 6.8 2.8 V3.4 Q6.8 4.6 5.5 4.6 H1.5 M4.5 4.6 L7 8" fill="none" stroke="#d8d8d8" stroke-width="1.1"/></svg>
<div style="left:259px;top:6px;width:19px;height:20px;background:#222222;"></div>
<svg style="position:absolute;left:264px;top:12px" width="9" height="9" viewBox="0 0 9 9"><path d="M2.8 1.5 H6.2 M2.8 7.5 H6.2 M4.5 1.5 V7.5" fill="none" stroke="#9c9c9c" stroke-width="1.05"/></svg>
<svg style="position:absolute;left:17px;top:30px" width="17" height="16" viewBox="0 0 17 16"><rect x="0" y="13" width="1" height="2" fill="#d0d0d0"/><rect x="2" y="12" width="1" height="3" fill="#d0d0d0"/><rect x="4" y="11" width="1" height="4" fill="#d0d0d0"/><rect x="6" y="10" width="1" height="5" fill="#d0d0d0"/><rect x="8" y="9" width="1" height="6" fill="#d0d0d0"/><rect x="10" y="8" width="1" height="7" fill="#d0d0d0"/><rect x="12" y="5" width="1" height="10" fill="#d0d0d0"/><rect x="14" y="1" width="1" height="14" fill="#d0d0d0"/></svg>
<svg style="position:absolute;left:37px;top:30px" width="20" height="20" viewBox="0 0 20 20"><circle cx="9.6" cy="9.3" r="9.2" fill="#888888"/><path d="M9.6 9.3 V0.2" stroke="#000" stroke-width="1.2"/><circle cx="9.6" cy="9.3" r="2.1" fill="#000"/></svg>
<div class="t" style="left:60.5px;top:33px;font-size:11px;color:#3a9fe0;line-height:12px">+0</div>
<svg style="position:absolute;left:100px;top:30px" width="18" height="16" viewBox="0 0 18 16"><path d="M1.5 1.5 V14.5 M3.6 3.2 V12.5 M5.4 5 V11.5 M12.4 5 V11.5 M14.5 3.2 V12.5 M16.6 1.5 V14.5" stroke="#d0d0d0" stroke-width="1.1"/><path d="M6.5 7 L9 8.5 L11.5 7 V10.5 L9 9 L6.5 10.5Z" fill="#d0d0d0"/></svg>
<svg style="position:absolute;left:121px;top:30px" width="20" height="20" viewBox="0 0 20 20"><circle cx="9.4" cy="9.5" r="9.3" fill="#888888"/><path d="M9.4 9.5 V0.2" stroke="#000" stroke-width="1.2"/><circle cx="9.4" cy="9.5" r="2.1" fill="#000"/></svg>
<div class="t" style="left:143.8px;top:33px;font-size:11px;color:#3a9fe0;line-height:12px">0</div>
<div style="left:237px;top:30px;width:19px;height:19px;background:#222222;"></div>
<svg style="position:absolute;left:237px;top:30px" width="19" height="19" viewBox="0 0 19 19"><circle cx="9.5" cy="9.3" r="1.4" fill="#d0d0d0"/><path d="M7.3 6.6 A3.8 3.8 0 0 0 7.3 12 M11.7 6.6 A3.8 3.8 0 0 1 11.7 12 M5.4 4.4 A6.6 6.6 0 0 0 5.4 14.2 M13.6 4.4 A6.6 6.6 0 0 1 13.6 14.2" fill="none" stroke="#d0d0d0" stroke-width="1.15"/></svg>
<div style="left:261px;top:36px;width:15px;height:91px;background:#000;"></div>
<div style="left:261px;top:44px;width:15px;height:1px;background:#303030;"></div>
<div style="left:268px;top:36px;width:1px;height:8px;background:#303030;"></div>
<div style="left:261px;top:125px;width:7px;height:1px;background:#f0e800;"></div>
<div style="left:269px;top:125px;width:7px;height:1px;background:#f0e800;"></div>
<div style="left:16px;top:52px;width:240px;height:54px;background:#000;overflow:hidden">
<div style="left:1px;top:1px;width:238px;height:52px;background:#262626"></div>
<div class="t" style="left:7.5px;top:4px;font-size:14px;color:#c8c8c8;font-style:italic;line-height:16px;letter-spacing:-0.8px">fx</div>
<div style="left:23px;top:4px;width:17px;height:17px;background:#202020"></div>
<svg style="position:absolute;left:23px;top:4px" width="17" height="17" viewBox="0 0 17 17"><path d="M5.3 3.9 A5.1 5.1 0 1 0 11.7 3.9" fill="none" stroke="#cdcdcd" stroke-width="1.25"/><path d="M8.5 1.3 V7.5" stroke="#cdcdcd" stroke-width="1.25"/></svg>
<div style="left:43px;top:4px;width:17px;height:17px;background:#202020"></div>
<svg style="position:absolute;left:43px;top:4px" width="17" height="17" viewBox="0 0 17 17"><path d="M2 9 H7.5" stroke="#c8c8c8" stroke-width="1.2"/><path d="M6.5 6 L10 9 L6.5 12Z" fill="#c8c8c8"/><rect x="10.9" y="4" width="2" height="11" fill="#c8c8c8"/><rect x="10.2" y="5.5" width="3.4" height="3.5" rx="1.2" fill="#c8c8c8"/><circle cx="11.9" cy="7.2" r="0.7" fill="#232323"/></svg>
<div style="left:219px;top:4px;width:17px;height:17px;background:#202020"></div>
<svg style="position:absolute;left:219px;top:4px" width="17" height="17" viewBox="0 0 17 17"><path d="M11.8 2 L3.6 9.8 H8.3 L5.2 15.5 L13.4 7.5 H8.7Z" fill="#c8c8c8"/></svg>
<div style="left:1px;top:23px;width:238px;height:1px;background:#1e1e1e"></div>
<div style="left:1px;top:24px;width:238px;height:17px;background:#1e1e1e"></div>
<div style="left:2px;top:24px;width:18px;height:17px;background:#232323"></div>
<div style="left:21px;top:24px;width:2px;height:17px;background:#232323"></div>
<div style="left:40px;top:24px;width:166px;height:17px;background:#232323"></div>
<div class="t" style="left:9.5px;top:26px;font-size:11px;color:#a9a9a9;line-height:12px">1</div>
<div style="left:23px;top:24px;width:17px;height:17px;background:#232323"></div>
<svg style="position:absolute;left:23px;top:24px" width="17" height="17" viewBox="0 0 17 17"><path d="M5.3 3.9 A5.1 5.1 0 1 0 11.7 3.9" fill="none" stroke="#cdcdcd" stroke-width="1.25"/><path d="M8.5 1.3 V7.5" stroke="#cdcdcd" stroke-width="1.25"/></svg>
<div style="left:206px;top:24px;width:17px;height:17px;background:#262626"></div>
<svg style="position:absolute;left:206px;top:24px" width="17" height="17" viewBox="0 0 17 17"><path d="M6.5 4 L11 8.5 L6.5 13Z" fill="#bdbdbd"/></svg>
<div style="left:224px;top:24px;width:14px;height:15px;background:#2b2b2b"></div>
<div style="left:224px;top:39px;width:14px;height:15px;background:#1c1c1c"></div>
<div style="left:205px;top:24px;width:1px;height:29px;background:#1e1e1e"></div>
<div style="left:1px;top:41px;width:238px;height:1px;background:#202020"></div>
<div style="left:2px;top:42px;width:18px;height:11px;background:#232323"></div>
<div style="left:21px;top:42px;width:2px;height:11px;background:#232323"></div>
<div style="left:40px;top:42px;width:166px;height:11px;background:#232323"></div>
<div class="t" style="left:9.5px;top:45px;font-size:11px;color:#a9a9a9;line-height:12px">2</div>
<div style="left:23px;top:42px;width:17px;height:11px;background:#232323"></div>
<svg style="position:absolute;left:23px;top:42.5px" width="17" height="17" viewBox="0 0 17 17"><path d="M5.3 3.9 A5.1 5.1 0 1 0 11.7 3.9" fill="none" stroke="#cdcdcd" stroke-width="1.25"/><path d="M8.5 1.3 V7.5" stroke="#cdcdcd" stroke-width="1.25"/></svg>
<div style="left:206px;top:42px;width:17px;height:11px;background:#262626"></div>
<svg style="position:absolute;left:206px;top:42.5px" width="17" height="17" viewBox="0 0 17 17"><path d="M6.5 4 L11 8.5 L6.5 13Z" fill="#bdbdbd"/></svg>
<div style="left:239px;top:1px;width:1px;height:52px;background:#000"></div>
<div style="left:1px;top:53px;width:238px;height:1px;background:#000"></div>
</div>
<svg style="position:absolute;left:18px;top:112px" width="7" height="11" viewBox="0 0 7 11"><path d="M0.5 1 L5.5 5.5 L0.5 10Z" fill="#cfcfcf"/></svg>
<div style="left:34px;top:109px;width:222px;height:19px;background:#1f1f1f;"></div>
<div class="t" style="left:41px;top:114px;font-size:10.2px;color:#d8d8d8;line-height:12px;font-weight:bold;letter-spacing:-0.25px">Read</div>
<svg style="position:absolute;left:241px;top:115.5px" width="11" height="7" viewBox="0 0 11 7"><path d="M0.5 0.5 H10 L5.25 5.5Z" fill="#d0d0d0"/></svg>
</div>
<div style="left:290px;top:79px;width:1110px;height:711px;background:#222222;"></div>
<div style="left:290px;top:80px;width:1110px;height:134px;background:#4c4c4c;"></div>
<div style="left:290px;top:79px;width:1110px;height:1px;background:#000;"></div>
<div style="left:290px;top:214px;width:1110px;height:3px;background:#000;"></div>
<div style="left:5px;top:214px;width:284px;height:3px;background:#000;"></div>
<div style="left:290px;top:351px;width:1110px;height:3px;background:#000;"></div>
<div style="left:5px;top:351px;width:284px;height:3px;background:#000;"></div>
<div style="left:290px;top:488px;width:1110px;height:3px;background:#000;"></div>
<div style="left:5px;top:488px;width:284px;height:3px;background:#000;"></div>
<div style="left:290px;top:625px;width:1110px;height:3px;background:#000;"></div>
<div style="left:5px;top:625px;width:284px;height:3px;background:#000;"></div>
<div style="left:290px;top:762px;width:1110px;height:3px;background:#000;"></div>
<div style="left:5px;top:762px;width:284px;height:3px;background:#000;"></div>
<div style="left:290px;top:899px;width:1110px;height:3px;background:#000;"></div>
<div style="left:5px;top:899px;width:284px;height:3px;background:#000;"></div>
<div style="left:288px;top:79px;width:1px;height:711px;background:#0e1616;"></div>
<div style="left:289px;top:79px;width:1px;height:711px;background:#c00000;"></div>
<div style="left:290px;top:79px;width:1px;height:711px;background:#1c2424;"></div>
<div style="left:1400px;top:79px;width:27px;height:711px;background:#262626;"></div>
<div style="left:1420px;top:79px;width:1px;height:711px;background:#303030;"></div>
<div style="left:1400px;top:79px;width:20px;height:711px;background:#000;"></div>
<div style="left:1402px;top:80px;width:16px;height:526px;background:#3580b0;"></div>
<div style="left:1403px;top:87px;width:14px;height:92px;background:#74f5b6;"></div>
<div style="left:1403px;top:182px;width:14px;height:98px;background:#7c6f98;"></div>
<div style="left:1403px;top:283px;width:14px;height:98px;background:#8f6c98;"></div>
<div style="left:1403px;top:384px;width:14px;height:100px;background:#6e8197;"></div>
<div style="left:1403px;top:487px;width:14px;height:98px;background:#87936c;"></div>
<div style="left:1403px;top:588px;width:14px;height:11px;background:#72709a;"></div>
<div style="left:1403px;top:179px;width:14px;height:3px;background:#303030;"></div>
<div style="left:1403px;top:280px;width:14px;height:3px;background:#303030;"></div>
<div style="left:1403px;top:381px;width:14px;height:3px;background:#303030;"></div>
<div style="left:1403px;top:484px;width:14px;height:3px;background:#303030;"></div>
<div style="left:1403px;top:585px;width:14px;height:3px;background:#303030;"></div>
<div style="left:1402px;top:80px;width:16px;height:7px;background:#3a9cc0;"></div>
<div style="left:1405px;top:82px;width:10px;height:1px;background:#8ccfd8;"></div>
<div style="left:1405px;top:84px;width:10px;height:1px;background:#8ccfd8;"></div>
<div style="left:1402px;top:599px;width:16px;height:7px;background:#3a8cc0;"></div>
<div style="left:1405px;top:601px;width:10px;height:1px;background:#90c0dc;"></div>
<div style="left:1405px;top:603px;width:10px;height:1px;background:#90c0dc;"></div>
<div style="left:1403px;top:606px;width:14px;height:81px;background:#4e4e80;"></div>
<div style="left:1403px;top:690px;width:14px;height:98px;background:#4d5d7c;"></div>
<div style="left:1406px;top:339px;width:8px;height:1px;background:#d8c8e0;"></div>
<div style="left:1406px;top:341px;width:8px;height:1px;background:#d8c8e0;"></div>
<div style="left:1406px;top:343px;width:8px;height:1px;background:#d8c8e0;"></div>
<div style="left:1406px;top:345px;width:8px;height:1px;background:#d8c8e0;"></div>
<div style="left:0px;top:789px;width:1427px;height:37px;background:#262626;"></div>
<div style="left:0px;top:789px;width:1427px;height:1px;background:#0d0d0d;"></div>
<div style="left:0px;top:790px;width:1427px;height:1px;background:#2c2c2c;"></div>
<div class="t" style="left:10px;top:802px;font-size:16px;color:#2e9ad8;line-height:18px;letter-spacing:0px">0:00.000</div>
<svg style="position:absolute;left:499px;top:803px;" width="10" height="10" viewBox="0 0 10 10"><rect x="0" y="0" width="9" height="9" fill="#8a8a8a"/></svg>
<svg style="position:absolute;left:528px;top:801px;" width="12" height="13" viewBox="0 0 12 13"><path d="M1 1 L11 6.5 L1 12Z" fill="#bdbdbd"/></svg>
<svg style="position:absolute;left:559px;top:802px;" width="10" height="11" viewBox="0 0 10 11"><rect x="0.5" y="0.5" width="3" height="10" fill="#8a8a8a"/><rect x="5.5" y="0.5" width="3" height="10" fill="#8a8a8a"/></svg>
<svg style="position:absolute;left:587px;top:802px;" width="13" height="11" viewBox="0 0 13 11"><rect x="0.5" y="0" width="2" height="11" fill="#bdbdbd"/><path d="M12 0.5 V10.5 L3 5.5Z" fill="#bdbdbd"/></svg>
<svg style="position:absolute;left:616px;top:802px;" width="17" height="11" viewBox="0 0 17 11"><path d="M8 1 V10 L0.5 5.5Z M16.5 1 V10 L9 5.5Z" fill="#bdbdbd"/></svg>
<svg style="position:absolute;left:646px;top:802px;" width="17" height="11" viewBox="0 0 17 11"><path d="M0.5 1 V10 L8 5.5Z M9 1 V10 L16.5 5.5Z" fill="#bdbdbd"/></svg>
<svg style="position:absolute;left:678px;top:802px;" width="13" height="11" viewBox="0 0 13 11"><path d="M0.5 0.5 V10.5 L9.5 5.5Z" fill="#bdbdbd"/><rect x="10" y="0" width="2" height="11" fill="#bdbdbd"/></svg>
<svg style="position:absolute;left:708px;top:802px;" width="12" height="12" viewBox="0 0 12 12"><circle cx="6" cy="6" r="5.2" fill="#6c2626"/></svg>
<svg style="position:absolute;left:736px;top:800px;" width="17" height="15" viewBox="0 0 17 15"><path d="M1.8 4 V12.2 H14.2 V7" fill="none" stroke="#cdcdcd" stroke-width="1.7"/><path d="M1 4.3 H8" stroke="#cdcdcd" stroke-width="1.7"/><path d="M7.5 0.8 L13.5 5 L7.5 8.8Z" fill="#cdcdcd"/></svg>
<svg style="position:absolute;left:765px;top:801px;" width="19" height="13" viewBox="0 0 19 13"><path d="M0.8 6.5 H3 Q5.5 6.5 5.5 3.5 V0.5 M3 6.5 Q5.5 6.5 5.5 9.5 V12.5 M8.5 0.5 V3.5 Q8.5 6.5 11 6.5 H14 M8.5 12.5 V9.5 Q8.5 6.5 11 6.5" fill="none" stroke="#cdcdcd" stroke-width="1.5"/><path d="M13 2.5 L17.8 6.5 L13 10.5Z" fill="#cdcdcd"/></svg>
<svg style="position:absolute;left:1154px;top:799px;" width="20" height="20" viewBox="0 0 20 20"><path d="M2 1 V17" stroke="#c8c8c8" stroke-width="1.2"/><path d="M0 2.5 L2 0 L4 2.5 M0 15.5 L2 18 L4 15.5" fill="#c8c8c8"/><circle cx="10" cy="9" r="4.3" fill="none" stroke="#c8c8c8" stroke-width="1.4"/><path d="M7.8 9 H12.2 M10 6.8 V11.2" stroke="#c8c8c8" stroke-width="1.3"/><path d="M13 12 L16.5 15.5" stroke="#c8c8c8" stroke-width="2"/></svg>
<svg style="position:absolute;left:1184px;top:799px;" width="20" height="20" viewBox="0 0 20 20"><path d="M2 1 V17" stroke="#c8c8c8" stroke-width="1.2"/><path d="M0 2.5 L2 0 L4 2.5 M0 15.5 L2 18 L4 15.5" fill="#c8c8c8"/><circle cx="10" cy="9" r="4.3" fill="none" stroke="#c8c8c8" stroke-width="1.4"/><path d="M7.8 9 H12.2" stroke="#c8c8c8" stroke-width="1.3"/><path d="M13 12 L16.5 15.5" stroke="#c8c8c8" stroke-width="2"/></svg>
<svg style="position:absolute;left:1213px;top:799px;" width="20" height="20" viewBox="0 0 20 20"><path d="M1 1.5 H17" stroke="#c8c8c8" stroke-width="1.2"/><path d="M2.5 0 L0 1.5 L2.5 3 M15.5 0 L18 1.5 L15.5 3" fill="#c8c8c8"/><circle cx="9" cy="10" r="4.3" fill="none" stroke="#c8c8c8" stroke-width="1.4"/><path d="M6.8 10 H11.2 M9 7.8 V12.2" stroke="#c8c8c8" stroke-width="1.3"/><path d="M12 13 L15.5 16.5" stroke="#c8c8c8" stroke-width="2"/></svg>
<svg style="position:absolute;left:1243px;top:799px;" width="20" height="20" viewBox="0 0 20 20"><path d="M1 1.5 H17" stroke="#888" stroke-width="1.2"/><path d="M2.5 0 L0 1.5 L2.5 3 M15.5 0 L18 1.5 L15.5 3" fill="#888"/><circle cx="9" cy="10" r="4.3" fill="none" stroke="#888" stroke-width="1.4"/><path d="M6.8 10 H11.2" stroke="#888" stroke-width="1.3"/><path d="M12 13 L15.5 16.5" stroke="#888" stroke-width="2"/></svg>
<svg style="position:absolute;left:1273px;top:799px;" width="20" height="20" viewBox="0 0 20 20"><path d="M9 0 L11 2 H7Z M9 18 L11 16 H7Z M0 9 L2 7 V11Z" fill="#c8c8c8"/><path d="M18 9 L16 7 V11Z" fill="#c8c8c8"/><circle cx="9" cy="9" r="4.3" fill="none" stroke="#c8c8c8" stroke-width="1.4"/><path d="M6.8 9 H11.2" stroke="#c8c8c8" stroke-width="1.3"/><path d="M12 12 L15.5 15.5" stroke="#c8c8c8" stroke-width="2"/></svg>
<svg style="position:absolute;left:1304px;top:799px;" width="20" height="20" viewBox="0 0 20 20"><path d="M3 6 L1 9 L3 12" fill="none" stroke="#c8c8c8" stroke-width="1"/><rect x="4" y="4" width="2.5" height="11" fill="#9a9a9a"/><circle cx="12.5" cy="9.5" r="4.8" fill="#666" stroke="#c8c8c8" stroke-width="1.3"/><path d="M16 13 L19 16" stroke="#c8c8c8" stroke-width="2"/></svg>
<svg style="position:absolute;left:1334px;top:799px;" width="20" height="20" viewBox="0 0 20 20"><rect x="1" y="4" width="2.5" height="11" fill="#9a9a9a"/><path d="M4 6 L6 9 L4 12" fill="none" stroke="#c8c8c8" stroke-width="1"/><circle cx="12.5" cy="9.5" r="4.8" fill="#666" stroke="#c8c8c8" stroke-width="1.3"/><path d="M16 13 L19 16" stroke="#c8c8c8" stroke-width="2"/></svg>
<svg style="position:absolute;left:1364px;top:799px;" width="20" height="20" viewBox="0 0 20 20"><path d="M2 6 L0.5 9 L2 12 M8 6 L9.5 9 L8 12" fill="none" stroke="#c8c8c8" stroke-width="1"/><rect x="3.5" y="4" width="1.5" height="11" fill="#9a9a9a"/><rect x="5.5" y="4" width="1.5" height="11" fill="#9a9a9a"/><circle cx="13.5" cy="9.5" r="4.8" fill="#666" stroke="#c8c8c8" stroke-width="1.3"/><path d="M17 13 L20 16" stroke="#c8c8c8" stroke-width="2"/></svg>
<svg style="position:absolute;left:1393px;top:799px;" width="20" height="20" viewBox="0 0 20 20"><path d="M2 2 H7 M2 17 H7" stroke="#c8c8c8" stroke-width="1"/><path d="M4.5 2 V17" stroke="#c8c8c8" stroke-width="1.2"/><circle cx="12" cy="9" r="4.3" fill="none" stroke="#c8c8c8" stroke-width="1.4"/><path d="M9.8 9 H14.2 M12 6.8 V11.2" stroke="#c8c8c8" stroke-width="1.3"/><path d="M15 12 L18.5 15.5" stroke="#c8c8c8" stroke-width="2"/></svg>
<svg style="position:absolute;left:40px;top:3px;" width="60" height="48" viewBox="0 0 60 48"><path d="M54.6 3.4 L16 36" stroke="#c80000" stroke-width="2.7"/><path d="M7 45 L12.7 31 L22.3 41Z" fill="#c80000"/></svg>
<div style="left:228px;top:173px;width:248px;height:306px;background:#a0a0a0;box-shadow:2px 2px 3px rgba(0,0,0,0.35)"></div>
<div style="left:229px;top:174px;width:246px;height:304px;background:#f0f0f0;"></div>
<div style="left:258px;top:176px;width:1px;height:300px;background:#d7d7d7;"></div>
<div style="left:259px;top:223px;width:215px;height:1px;background:#d7d7d7;"></div>
<div style="left:259px;top:428px;width:215px;height:1px;background:#d7d7d7;"></div>
<div style="left:231px;top:315px;width:242px;height:22px;background:#cde4f7;border:1px solid #8fbde8"></div>
<div class="t" style="left:263px;top:179.5px;font-size:12px;line-height:15px;color:#6d6d6d">Edit Effect</div>
<div class="t" style="left:263px;top:201.5px;font-size:12px;line-height:15px;color:#6d6d6d">Remove Effect</div>
<div class="t" style="left:263px;top:230.5px;font-size:12px;line-height:15px;color:#000000">Amplitude and Compression</div>
<svg style="position:absolute;left:459px;top:233px;" width="6" height="10" viewBox="0 0 6 10"><path d="M0.5 1 L5 5 L0.5 9Z" fill="#202020"/></svg>
<div class="t" style="left:263px;top:252.5px;font-size:12px;line-height:15px;color:#000000">Delay and Echo</div>
<svg style="position:absolute;left:459px;top:255px;" width="6" height="10" viewBox="0 0 6 10"><path d="M0.5 1 L5 5 L0.5 9Z" fill="#202020"/></svg>
<div class="t" style="left:263px;top:274.5px;font-size:12px;line-height:15px;color:#000000">Filter and EQ</div>
<svg style="position:absolute;left:459px;top:277px;" width="6" height="10" viewBox="0 0 6 10"><path d="M0.5 1 L5 5 L0.5 9Z" fill="#202020"/></svg>
<div class="t" style="left:263px;top:296.5px;font-size:12px;line-height:15px;color:#000000">Modulation</div>
<svg style="position:absolute;left:459px;top:299px;" width="6" height="10" viewBox="0 0 6 10"><path d="M0.5 1 L5 5 L0.5 9Z" fill="#202020"/></svg>
<div class="t" style="left:263px;top:318.5px;font-size:12px;line-height:15px;color:#000000">Noise Reduction / Restoration</div>
<svg style="position:absolute;left:459px;top:321px;" width="6" height="10" viewBox="0 0 6 10"><path d="M0.5 1 L5 5 L0.5 9Z" fill="#202020"/></svg>
<div class="t" style="left:263px;top:340.5px;font-size:12px;line-height:15px;color:#000000">Reverb</div>
<svg style="position:absolute;left:459px;top:343px;" width="6" height="10" viewBox="0 0 6 10"><path d="M0.5 1 L5 5 L0.5 9Z" fill="#202020"/></svg>
<div class="t" style="left:263px;top:362.5px;font-size:12px;line-height:15px;color:#000000">Special</div>
<svg style="position:absolute;left:459px;top:365px;" width="6" height="10" viewBox="0 0 6 10"><path d="M0.5 1 L5 5 L0.5 9Z" fill="#202020"/></svg>
<div class="t" style="left:263px;top:384.5px;font-size:12px;line-height:15px;color:#000000">Stereo Imagery</div>
<svg style="position:absolute;left:459px;top:387px;" width="6" height="10" viewBox="0 0 6 10"><path d="M0.5 1 L5 5 L0.5 9Z" fill="#202020"/></svg>
<div class="t" style="left:263px;top:406.5px;font-size:12px;line-height:15px;color:#000000">Time and Pitch</div>
<svg style="position:absolute;left:459px;top:409px;" width="6" height="10" viewBox="0 0 6 10"><path d="M0.5 1 L5 5 L0.5 9Z" fill="#202020"/></svg>
<div class="t" style="left:263px;top:435.5px;font-size:12px;line-height:15px;color:#000000">VST</div>
<svg style="position:absolute;left:459px;top:438px;" width="6" height="10" viewBox="0 0 6 10"><path d="M0.5 1 L5 5 L0.5 9Z" fill="#202020"/></svg>
<div class="t" style="left:263px;top:457.5px;font-size:12px;line-height:15px;color:#000000">VST3</div>
<svg style="position:absolute;left:459px;top:460px;" width="6" height="10" viewBox="0 0 6 10"><path d="M0.5 1 L5 5 L0.5 9Z" fill="#202020"/></svg>
<div style="left:470px;top:312px;width:248px;height:94px;background:#a0a0a0;box-shadow:2px 2px 3px rgba(0,0,0,0.35)"></div>
<div style="left:471px;top:313px;width:246px;height:92px;background:#f0f0f0;"></div>
<div style="left:500px;top:315px;width:1px;height:87px;background:#d7d7d7;"></div>
<div style="left:473px;top:315px;width:242px;height:22px;background:#cde4f7;border:1px solid #8fbde8"></div>
<div class="t" style="left:505px;top:318.5px;font-size:11.8px;line-height:15px;color:#000">Adaptive Noise Reduction...</div>
<div class="t" style="left:505px;top:340.5px;font-size:11.8px;line-height:15px;color:#000">Automatic Click Remover...</div>
<div class="t" style="left:505px;top:362.5px;font-size:11.8px;line-height:15px;color:#000">Automatic Phase Correction...</div>
<div class="t" style="left:505px;top:384.5px;font-size:11.8px;line-height:15px;color:#000">DeHummer...</div>
<div style="left:734px;top:234px;width:525px;height:431px;background:#b6cbe0;border-radius:5px 5px 2px 2px"></div>
<div style="left:742px;top:265px;width:509px;height:392px;background:#252525;"></div>
<div class="t" style="left:734px;top:242px;width:525px;text-align:center;font-size:14.9px;line-height:17px;color:#262c3a">Rack Effect - Adaptive Noise Reduction</div>
<div style="left:1231px;top:240px;width:19px;height:19px;background:#c74848;"></div>
<svg style="position:absolute;left:1231px;top:240px;" width="19" height="19" viewBox="0 0 19 19"><path d="M6.8 6.8 L12.2 12.2 M12.2 6.8 L6.8 12.2" stroke="#fff" stroke-width="1.6"/></svg>
<div class="t" style="left:756px;top:284px;font-size:11px;line-height:13px;color:#bdbdbd">Presets:</div>
<div style="left:797px;top:280px;width:216px;height:19px;background:#1b1b1b;"></div>
<div class="t" style="left:804px;top:284px;font-size:11px;line-height:13px;color:#e6e6e6">(Custom)</div>
<svg style="position:absolute;left:998px;top:287px;" width="11" height="7" viewBox="0 0 11 7"><path d="M0.5 0.5 H10 L5.25 5.5Z" fill="#dcdcdc"/></svg>
<svg style="position:absolute;left:1024px;top:282px;" width="18" height="16" viewBox="0 0 18 16"><rect x="1.5" y="7.6" width="15" height="6.5" rx="1.2" fill="#6c6c6c" stroke="#c8c8c8" stroke-width="1.1"/><circle cx="3.6" cy="9.7" r="0.8" fill="#eeeeee"/><rect x="8.2" y="1" width="2.6" height="4.6" fill="#d0d0d0"/><path d="M5.8 4.2 H13.2 L9.5 8.4Z" fill="#d0d0d0"/></svg>
<svg style="position:absolute;left:1050px;top:282px;" width="13" height="15" viewBox="0 0 13 15"><rect x="0.8" y="3.4" width="11.2" height="1.7" rx="0.8" fill="#d0d0d0"/><path d="M4.6 3.4 V2.2 Q4.6 1.2 5.6 1.2 H7.6 Q8.6 1.2 8.6 2.2 V3.4" fill="none" stroke="#d0d0d0" stroke-width="1.1"/><path d="M2.6 6 V13.2 Q2.6 13.8 3.2 13.8 H10.1 Q10.7 13.8 10.7 13.2 V6 M4.6 6 V13.5 M6.6 6 V13.5 M8.6 6 V13.5" fill="none" stroke="#d0d0d0" stroke-width="1.1"/></svg>
<svg style="position:absolute;left:1198px;top:283px;" width="14" height="14" viewBox="0 0 14 14"><rect x="0.9" y="1" width="4.2" height="2.8" fill="#d8d8d8"/><path d="M5 2.4 H6.5 V7.6 H10.2" fill="none" stroke="#d0d0d0" stroke-width="1.1"/><rect x="10.1" y="2" width="3" height="3" fill="#d8d8d8"/><rect x="10.1" y="6" width="3" height="3" fill="#d8d8d8"/><rect x="10.1" y="10" width="3" height="3" fill="#d8d8d8"/></svg>
<svg style="position:absolute;left:1221px;top:281px;" width="18" height="18" viewBox="0 0 18 18"><defs><linearGradient id="ig" x1="0" y1="0" x2="0" y2="1"><stop offset="0" stop-color="#cccccc"/><stop offset="1" stop-color="#a4a4a4"/></linearGradient></defs><circle cx="9" cy="9" r="8.1" fill="url(#ig)"/><circle cx="9" cy="4.8" r="1.4" fill="#2a2a2a"/><path d="M7 7.5 H10 V13 H11.3 V14 H6.8 V13 H8 V8.5 H7Z" fill="#2a2a2a"/></svg>
<div style="left:757px;top:308px;width:479px;height:1px;background:#343434;"></div>
<div class="t" style="right:531px;top:346px;font-size:10.6px;line-height:13px;color:#bdbdbd;text-align:right">Reduce Noise By:</div>
<div style="left:908px;top:356px;width:217px;height:4px;background:#151515;"></div>
<svg style="position:absolute;left:908px;top:351px;" width="218" height="6" viewBox="0 0 218 6"><rect x="0" y="0" width="1" height="5" fill="#bcbcbc"/><rect x="5" y="2" width="1" height="3" fill="#a8a8a8"/><rect x="11" y="2" width="1" height="3" fill="#a8a8a8"/><rect x="16" y="2" width="1" height="3" fill="#a8a8a8"/><rect x="22" y="2" width="1" height="3" fill="#a8a8a8"/><rect x="27" y="0" width="1" height="5" fill="#bcbcbc"/><rect x="32" y="2" width="1" height="3" fill="#a8a8a8"/><rect x="38" y="2" width="1" height="3" fill="#a8a8a8"/><rect x="43" y="2" width="1" height="3" fill="#a8a8a8"/><rect x="49" y="2" width="1" height="3" fill="#a8a8a8"/><rect x="54" y="0" width="1" height="5" fill="#bcbcbc"/><rect x="59" y="2" width="1" height="3" fill="#a8a8a8"/><rect x="65" y="2" width="1" height="3" fill="#a8a8a8"/><rect x="70" y="2" width="1" height="3" fill="#a8a8a8"/><rect x="76" y="2" width="1" height="3" fill="#a8a8a8"/><rect x="81" y="0" width="1" height="5" fill="#bcbcbc"/><rect x="86" y="2" width="1" height="3" fill="#a8a8a8"/><rect x="92" y="2" width="1" height="3" fill="#a8a8a8"/><rect x="97" y="2" width="1" height="3" fill="#a8a8a8"/><rect x="103" y="2" width="1" height="3" fill="#a8a8a8"/><rect x="108" y="0" width="1" height="5" fill="#bcbcbc"/><rect x="113" y="2" width="1" height="3" fill="#a8a8a8"/><rect x="119" y="2" width="1" height="3" fill="#a8a8a8"/><rect x="124" y="2" width="1" height="3" fill="#a8a8a8"/><rect x="130" y="2" width="1" height="3" fill="#a8a8a8"/><rect x="135" y="0" width="1" height="5" fill="#bcbcbc"/><rect x="140" y="2" width="1" height="3" fill="#a8a8a8"/><rect x="146" y="2" width="1" height="3" fill="#a8a8a8"/><rect x="151" y="2" width="1" height="3" fill="#a8a8a8"/><rect x="157" y="2" width="1" height="3" fill="#a8a8a8"/><rect x="162" y="0" width="1" height="5" fill="#bcbcbc"/><rect x="167" y="2" width="1" height="3" fill="#a8a8a8"/><rect x="173" y="2" width="1" height="3" fill="#a8a8a8"/><rect x="178" y="2" width="1" height="3" fill="#a8a8a8"/><rect x="184" y="2" width="1" height="3" fill="#a8a8a8"/><rect x="189" y="0" width="1" height="5" fill="#bcbcbc"/><rect x="194" y="2" width="1" height="3" fill="#a8a8a8"/><rect x="200" y="2" width="1" height="3" fill="#a8a8a8"/><rect x="205" y="2" width="1" height="3" fill="#a8a8a8"/><rect x="211" y="2" width="1" height="3" fill="#a8a8a8"/><rect x="216" y="0" width="1" height="5" fill="#bcbcbc"/></svg>
<div class="t" style="left:888.5px;width:40px;text-align:center;top:340px;font-size:9.5px;line-height:10px;color:#bdbdbd">0</div>
<div class="t" style="left:915.5px;width:40px;text-align:center;top:340px;font-size:9.5px;line-height:10px;color:#bdbdbd">5</div>
<div class="t" style="left:942.5px;width:40px;text-align:center;top:340px;font-size:9.5px;line-height:10px;color:#bdbdbd">10</div>
<div class="t" style="left:969.5px;width:40px;text-align:center;top:340px;font-size:9.5px;line-height:10px;color:#bdbdbd">15</div>
<div class="t" style="left:996.5px;width:40px;text-align:center;top:340px;font-size:9.5px;line-height:10px;color:#bdbdbd">20</div>
<div class="t" style="left:1023.5px;width:40px;text-align:center;top:340px;font-size:9.5px;line-height:10px;color:#bdbdbd">25</div>
<div class="t" style="left:1050.5px;width:40px;text-align:center;top:340px;font-size:9.5px;line-height:10px;color:#bdbdbd">30</div>
<div class="t" style="left:1077.5px;width:40px;text-align:center;top:340px;font-size:9.5px;line-height:10px;color:#bdbdbd">35</div>
<div class="t" style="left:1104.5px;width:40px;text-align:center;top:340px;font-size:9.5px;line-height:10px;color:#bdbdbd">40</div>
<svg style="position:absolute;left:1011px;top:349px;" width="11" height="14" viewBox="0 0 11 14"><path d="M0 4 L5.5 0 L11 4 V14 H0Z" fill="#888888"/></svg>
<div class="t" style="right:256.5px;top:346px;font-size:11px;line-height:13px;color:#3aa0e0;text-align:right">20,00</div>
<div class="t" style="left:1172.5px;top:346px;font-size:11px;line-height:13px;color:#bdbdbd">dB</div>
<div class="t" style="right:531px;top:380px;font-size:10.6px;line-height:13px;color:#bdbdbd;text-align:right">Noisiness:</div>
<div style="left:908px;top:390px;width:217px;height:4px;background:#151515;"></div>
<svg style="position:absolute;left:908px;top:385px;" width="218" height="6" viewBox="0 0 218 6"><rect x="0" y="0" width="1" height="5" fill="#bcbcbc"/><rect x="22" y="2" width="1" height="3" fill="#a8a8a8"/><rect x="43" y="0" width="1" height="5" fill="#bcbcbc"/><rect x="65" y="2" width="1" height="3" fill="#a8a8a8"/><rect x="86" y="0" width="1" height="5" fill="#bcbcbc"/><rect x="108" y="2" width="1" height="3" fill="#a8a8a8"/><rect x="130" y="0" width="1" height="5" fill="#bcbcbc"/><rect x="151" y="2" width="1" height="3" fill="#a8a8a8"/><rect x="173" y="0" width="1" height="5" fill="#bcbcbc"/><rect x="194" y="2" width="1" height="3" fill="#a8a8a8"/><rect x="216" y="0" width="1" height="5" fill="#bcbcbc"/></svg>
<div class="t" style="left:888.5px;width:40px;text-align:center;top:374px;font-size:9.5px;line-height:10px;color:#bdbdbd">0</div>
<div class="t" style="left:931.7px;width:40px;text-align:center;top:374px;font-size:9.5px;line-height:10px;color:#bdbdbd">20</div>
<div class="t" style="left:974.9px;width:40px;text-align:center;top:374px;font-size:9.5px;line-height:10px;color:#bdbdbd">40</div>
<div class="t" style="left:1018.1px;width:40px;text-align:center;top:374px;font-size:9.5px;line-height:10px;color:#bdbdbd">60</div>
<div class="t" style="left:1061.3px;width:40px;text-align:center;top:374px;font-size:9.5px;line-height:10px;color:#bdbdbd">80</div>
<div class="t" style="left:1104.5px;width:40px;text-align:center;top:374px;font-size:9.5px;line-height:10px;color:#bdbdbd">100</div>
<svg style="position:absolute;left:968px;top:383px;" width="11" height="14" viewBox="0 0 11 14"><path d="M0 4 L5.5 0 L11 4 V14 H0Z" fill="#888888"/></svg>
<div class="t" style="right:256.5px;top:380px;font-size:11px;line-height:13px;color:#3aa0e0;text-align:right">30,00</div>
<div class="t" style="left:1172.5px;top:380px;font-size:11px;line-height:13px;color:#bdbdbd">%</div>
<div class="t" style="right:531px;top:414px;font-size:10.6px;line-height:13px;color:#bdbdbd;text-align:right">Fine Tune Noise Floor:</div>
<div style="left:908px;top:424px;width:217px;height:4px;background:#151515;"></div>
<svg style="position:absolute;left:908px;top:419px;" width="218" height="6" viewBox="0 0 218 6"><rect x="0" y="0" width="1" height="5" fill="#bcbcbc"/><rect x="11" y="2" width="1" height="3" fill="#a8a8a8"/><rect x="22" y="0" width="1" height="5" fill="#bcbcbc"/><rect x="32" y="2" width="1" height="3" fill="#a8a8a8"/><rect x="43" y="0" width="1" height="5" fill="#bcbcbc"/><rect x="54" y="2" width="1" height="3" fill="#a8a8a8"/><rect x="65" y="0" width="1" height="5" fill="#bcbcbc"/><rect x="76" y="2" width="1" height="3" fill="#a8a8a8"/><rect x="86" y="0" width="1" height="5" fill="#bcbcbc"/><rect x="97" y="2" width="1" height="3" fill="#a8a8a8"/><rect x="108" y="0" width="1" height="5" fill="#bcbcbc"/><rect x="119" y="2" width="1" height="3" fill="#a8a8a8"/><rect x="130" y="0" width="1" height="5" fill="#bcbcbc"/><rect x="140" y="2" width="1" height="3" fill="#a8a8a8"/><rect x="151" y="0" width="1" height="5" fill="#bcbcbc"/><rect x="162" y="2" width="1" height="3" fill="#a8a8a8"/><rect x="173" y="0" width="1" height="5" fill="#bcbcbc"/><rect x="184" y="2" width="1" height="3" fill="#a8a8a8"/><rect x="194" y="0" width="1" height="5" fill="#bcbcbc"/><rect x="205" y="2" width="1" height="3" fill="#a8a8a8"/><rect x="216" y="0" width="1" height="5" fill="#bcbcbc"/></svg>
<div class="t" style="left:888.5px;width:40px;text-align:center;top:408px;font-size:9.5px;line-height:10px;color:#bdbdbd">-10</div>
<div class="t" style="left:910.1px;width:40px;text-align:center;top:408px;font-size:9.5px;line-height:10px;color:#bdbdbd">-8</div>
<div class="t" style="left:931.7px;width:40px;text-align:center;top:408px;font-size:9.5px;line-height:10px;color:#bdbdbd">-6</div>
<div class="t" style="left:953.3px;width:40px;text-align:center;top:408px;font-size:9.5px;line-height:10px;color:#bdbdbd">-4</div>
<div class="t" style="left:974.9px;width:40px;text-align:center;top:408px;font-size:9.5px;line-height:10px;color:#bdbdbd">-2</div>
<div class="t" style="left:996.5px;width:40px;text-align:center;top:408px;font-size:9.5px;line-height:10px;color:#bdbdbd">0</div>
<div class="t" style="left:1018.1px;width:40px;text-align:center;top:408px;font-size:9.5px;line-height:10px;color:#bdbdbd">2</div>
<div class="t" style="left:1039.7px;width:40px;text-align:center;top:408px;font-size:9.5px;line-height:10px;color:#bdbdbd">4</div>
<div class="t" style="left:1061.3px;width:40px;text-align:center;top:408px;font-size:9.5px;line-height:10px;color:#bdbdbd">6</div>
<div class="t" style="left:1082.9px;width:40px;text-align:center;top:408px;font-size:9.5px;line-height:10px;color:#bdbdbd">8</div>
<div class="t" style="left:1104.5px;width:40px;text-align:center;top:408px;font-size:9.5px;line-height:10px;color:#bdbdbd">10</div>
<svg style="position:absolute;left:1033px;top:417px;" width="11" height="14" viewBox="0 0 11 14"><path d="M0 4 L5.5 0 L11 4 V14 H0Z" fill="#888888"/></svg>
<div class="t" style="right:256.5px;top:414px;font-size:11px;line-height:13px;color:#3aa0e0;text-align:right">2,00</div>
<div class="t" style="left:1172.5px;top:414px;font-size:11px;line-height:13px;color:#bdbdbd">dB</div>
<div class="t" style="right:531px;top:448px;font-size:10.6px;line-height:13px;color:#bdbdbd;text-align:right">Signal Threshold:</div>
<div style="left:908px;top:458px;width:217px;height:4px;background:#151515;"></div>
<svg style="position:absolute;left:908px;top:453px;" width="218" height="6" viewBox="0 0 218 6"><rect x="0" y="0" width="1" height="5" fill="#bcbcbc"/><rect x="5" y="2" width="1" height="3" fill="#a8a8a8"/><rect x="11" y="2" width="1" height="3" fill="#a8a8a8"/><rect x="16" y="2" width="1" height="3" fill="#a8a8a8"/><rect x="22" y="2" width="1" height="3" fill="#a8a8a8"/><rect x="27" y="0" width="1" height="5" fill="#bcbcbc"/><rect x="32" y="2" width="1" height="3" fill="#a8a8a8"/><rect x="38" y="2" width="1" height="3" fill="#a8a8a8"/><rect x="43" y="2" width="1" height="3" fill="#a8a8a8"/><rect x="49" y="2" width="1" height="3" fill="#a8a8a8"/><rect x="54" y="0" width="1" height="5" fill="#bcbcbc"/><rect x="59" y="2" width="1" height="3" fill="#a8a8a8"/><rect x="65" y="2" width="1" height="3" fill="#a8a8a8"/><rect x="70" y="2" width="1" height="3" fill="#a8a8a8"/><rect x="76" y="2" width="1" height="3" fill="#a8a8a8"/><rect x="81" y="0" width="1" height="5" fill="#bcbcbc"/><rect x="86" y="2" width="1" height="3" fill="#a8a8a8"/><rect x="92" y="2" width="1" height="3" fill="#a8a8a8"/><rect x="97" y="2" width="1" height="3" fill="#a8a8a8"/><rect x="103" y="2" width="1" height="3" fill="#a8a8a8"/><rect x="108" y="0" width="1" height="5" fill="#bcbcbc"/><rect x="113" y="2" width="1" height="3" fill="#a8a8a8"/><rect x="119" y="2" width="1" height="3" fill="#a8a8a8"/><rect x="124" y="2" width="1" height="3" fill="#a8a8a8"/><rect x="130" y="2" width="1" height="3" fill="#a8a8a8"/><rect x="135" y="0" width="1" height="5" fill="#bcbcbc"/><rect x="140" y="2" width="1" height="3" fill="#a8a8a8"/><rect x="146" y="2" width="1" height="3" fill="#a8a8a8"/><rect x="151" y="2" width="1" height="3" fill="#a8a8a8"/><rect x="157" y="2" width="1" height="3" fill="#a8a8a8"/><rect x="162" y="0" width="1" height="5" fill="#bcbcbc"/><rect x="167" y="2" width="1" height="3" fill="#a8a8a8"/><rect x="173" y="2" width="1" height="3" fill="#a8a8a8"/><rect x="178" y="2" width="1" height="3" fill="#a8a8a8"/><rect x="184" y="2" width="1" height="3" fill="#a8a8a8"/><rect x="189" y="0" width="1" height="5" fill="#bcbcbc"/><rect x="194" y="2" width="1" height="3" fill="#a8a8a8"/><rect x="200" y="2" width="1" height="3" fill="#a8a8a8"/><rect x="205" y="2" width="1" height="3" fill="#a8a8a8"/><rect x="211" y="2" width="1" height="3" fill="#a8a8a8"/><rect x="216" y="0" width="1" height="5" fill="#bcbcbc"/></svg>
<div class="t" style="left:888.5px;width:40px;text-align:center;top:442px;font-size:9.5px;line-height:10px;color:#bdbdbd">-20</div>
<div class="t" style="left:915.5px;width:40px;text-align:center;top:442px;font-size:9.5px;line-height:10px;color:#bdbdbd">-15</div>
<div class="t" style="left:942.5px;width:40px;text-align:center;top:442px;font-size:9.5px;line-height:10px;color:#bdbdbd">-10</div>
<div class="t" style="left:969.5px;width:40px;text-align:center;top:442px;font-size:9.5px;line-height:10px;color:#bdbdbd">-5</div>
<div class="t" style="left:996.5px;width:40px;text-align:center;top:442px;font-size:9.5px;line-height:10px;color:#bdbdbd">0</div>
<div class="t" style="left:1023.5px;width:40px;text-align:center;top:442px;font-size:9.5px;line-height:10px;color:#bdbdbd">5</div>
<div class="t" style="left:1050.5px;width:40px;text-align:center;top:442px;font-size:9.5px;line-height:10px;color:#bdbdbd">10</div>
<div class="t" style="left:1077.5px;width:40px;text-align:center;top:442px;font-size:9.5px;line-height:10px;color:#bdbdbd">15</div>
<div class="t" style="left:1104.5px;width:40px;text-align:center;top:442px;font-size:9.5px;line-height:10px;color:#bdbdbd">20</div>
<svg style="position:absolute;left:1024px;top:451px;" width="11" height="14" viewBox="0 0 11 14"><path d="M0 4 L5.5 0 L11 4 V14 H0Z" fill="#888888"/></svg>
<div class="t" style="right:256.5px;top:448px;font-size:11px;line-height:13px;color:#3aa0e0;text-align:right">2,50</div>
<div class="t" style="left:1172.5px;top:448px;font-size:11px;line-height:13px;color:#bdbdbd">dB</div>
<div class="t" style="right:531px;top:482px;font-size:10.6px;line-height:13px;color:#bdbdbd;text-align:right">Spectral Decay Rate:</div>
<div style="left:908px;top:492px;width:217px;height:4px;background:#151515;"></div>
<svg style="position:absolute;left:908px;top:487px;" width="218" height="6" viewBox="0 0 218 6"><rect x="0" y="2" width="1" height="3" fill="#a8a8a8"/><rect x="6" y="2" width="1" height="3" fill="#a8a8a8"/><rect x="12" y="2" width="1" height="3" fill="#a8a8a8"/><rect x="18" y="2" width="1" height="3" fill="#a8a8a8"/><rect x="24" y="0" width="1" height="5" fill="#bcbcbc"/><rect x="30" y="2" width="1" height="3" fill="#a8a8a8"/><rect x="36" y="2" width="1" height="3" fill="#a8a8a8"/><rect x="41" y="2" width="1" height="3" fill="#a8a8a8"/><rect x="47" y="2" width="1" height="3" fill="#a8a8a8"/><rect x="53" y="0" width="1" height="5" fill="#bcbcbc"/><rect x="59" y="2" width="1" height="3" fill="#a8a8a8"/><rect x="65" y="2" width="1" height="3" fill="#a8a8a8"/><rect x="71" y="2" width="1" height="3" fill="#a8a8a8"/><rect x="77" y="2" width="1" height="3" fill="#a8a8a8"/><rect x="83" y="0" width="1" height="5" fill="#bcbcbc"/><rect x="89" y="2" width="1" height="3" fill="#a8a8a8"/><rect x="95" y="2" width="1" height="3" fill="#a8a8a8"/><rect x="101" y="2" width="1" height="3" fill="#a8a8a8"/><rect x="107" y="2" width="1" height="3" fill="#a8a8a8"/><rect x="112" y="0" width="1" height="5" fill="#bcbcbc"/><rect x="118" y="2" width="1" height="3" fill="#a8a8a8"/><rect x="124" y="2" width="1" height="3" fill="#a8a8a8"/><rect x="130" y="2" width="1" height="3" fill="#a8a8a8"/><rect x="136" y="2" width="1" height="3" fill="#a8a8a8"/><rect x="142" y="0" width="1" height="5" fill="#bcbcbc"/><rect x="148" y="2" width="1" height="3" fill="#a8a8a8"/><rect x="154" y="2" width="1" height="3" fill="#a8a8a8"/><rect x="160" y="2" width="1" height="3" fill="#a8a8a8"/><rect x="166" y="2" width="1" height="3" fill="#a8a8a8"/><rect x="172" y="0" width="1" height="5" fill="#bcbcbc"/><rect x="178" y="2" width="1" height="3" fill="#a8a8a8"/><rect x="183" y="2" width="1" height="3" fill="#a8a8a8"/><rect x="189" y="2" width="1" height="3" fill="#a8a8a8"/><rect x="195" y="2" width="1" height="3" fill="#a8a8a8"/><rect x="201" y="0" width="1" height="5" fill="#bcbcbc"/><rect x="207" y="2" width="1" height="3" fill="#a8a8a8"/><rect x="213" y="2" width="1" height="3" fill="#a8a8a8"/></svg>
<div class="t" style="left:912.2px;width:40px;text-align:center;top:476px;font-size:9.5px;line-height:10px;color:#bdbdbd">100</div>
<div class="t" style="left:941.8px;width:40px;text-align:center;top:476px;font-size:9.5px;line-height:10px;color:#bdbdbd">200</div>
<div class="t" style="left:971.3px;width:40px;text-align:center;top:476px;font-size:9.5px;line-height:10px;color:#bdbdbd">300</div>
<div class="t" style="left:1000.9px;width:40px;text-align:center;top:476px;font-size:9.5px;line-height:10px;color:#bdbdbd">400</div>
<div class="t" style="left:1030.5px;width:40px;text-align:center;top:476px;font-size:9.5px;line-height:10px;color:#bdbdbd">500</div>
<div class="t" style="left:1060.1px;width:40px;text-align:center;top:476px;font-size:9.5px;line-height:10px;color:#bdbdbd">600</div>
<div class="t" style="left:1089.7px;width:40px;text-align:center;top:476px;font-size:9.5px;line-height:10px;color:#bdbdbd">700</div>
<svg style="position:absolute;left:939px;top:485px;" width="11" height="14" viewBox="0 0 11 14"><path d="M0 4 L5.5 0 L11 4 V14 H0Z" fill="#888888"/></svg>
<div class="t" style="right:256.5px;top:482px;font-size:11px;line-height:13px;color:#3aa0e0;text-align:right">140,00</div>
<div class="t" style="left:1172.5px;top:482px;font-size:11px;line-height:13px;color:#bdbdbd">ms/60dB</div>
<div class="t" style="right:531px;top:516px;font-size:10.6px;line-height:13px;color:#bdbdbd;text-align:right">Broadband Preservation:</div>
<div style="left:908px;top:526px;width:217px;height:4px;background:#151515;"></div>
<svg style="position:absolute;left:908px;top:521px;" width="218" height="6" viewBox="0 0 218 6"><rect x="0" y="0" width="1" height="5" fill="#bcbcbc"/><rect x="9" y="2" width="1" height="3" fill="#a8a8a8"/><rect x="17" y="2" width="1" height="3" fill="#a8a8a8"/><rect x="26" y="2" width="1" height="3" fill="#a8a8a8"/><rect x="35" y="2" width="1" height="3" fill="#a8a8a8"/><rect x="43" y="0" width="1" height="5" fill="#bcbcbc"/><rect x="52" y="2" width="1" height="3" fill="#a8a8a8"/><rect x="60" y="2" width="1" height="3" fill="#a8a8a8"/><rect x="69" y="2" width="1" height="3" fill="#a8a8a8"/><rect x="78" y="2" width="1" height="3" fill="#a8a8a8"/><rect x="86" y="0" width="1" height="5" fill="#bcbcbc"/><rect x="95" y="2" width="1" height="3" fill="#a8a8a8"/><rect x="104" y="2" width="1" height="3" fill="#a8a8a8"/><rect x="112" y="2" width="1" height="3" fill="#a8a8a8"/><rect x="121" y="2" width="1" height="3" fill="#a8a8a8"/><rect x="130" y="0" width="1" height="5" fill="#bcbcbc"/><rect x="138" y="2" width="1" height="3" fill="#a8a8a8"/><rect x="147" y="2" width="1" height="3" fill="#a8a8a8"/><rect x="156" y="2" width="1" height="3" fill="#a8a8a8"/><rect x="164" y="2" width="1" height="3" fill="#a8a8a8"/><rect x="173" y="0" width="1" height="5" fill="#bcbcbc"/><rect x="181" y="2" width="1" height="3" fill="#a8a8a8"/><rect x="190" y="2" width="1" height="3" fill="#a8a8a8"/><rect x="199" y="2" width="1" height="3" fill="#a8a8a8"/><rect x="207" y="2" width="1" height="3" fill="#a8a8a8"/><rect x="216" y="0" width="1" height="5" fill="#bcbcbc"/></svg>
<div class="t" style="left:888.5px;width:40px;text-align:center;top:510px;font-size:9.5px;line-height:10px;color:#bdbdbd">0</div>
<div class="t" style="left:931.7px;width:40px;text-align:center;top:510px;font-size:9.5px;line-height:10px;color:#bdbdbd">100</div>
<div class="t" style="left:974.9px;width:40px;text-align:center;top:510px;font-size:9.5px;line-height:10px;color:#bdbdbd">200</div>
<div class="t" style="left:1018.1px;width:40px;text-align:center;top:510px;font-size:9.5px;line-height:10px;color:#bdbdbd">300</div>
<div class="t" style="left:1061.3px;width:40px;text-align:center;top:510px;font-size:9.5px;line-height:10px;color:#bdbdbd">400</div>
<div class="t" style="left:1104.5px;width:40px;text-align:center;top:510px;font-size:9.5px;line-height:10px;color:#bdbdbd">500</div>
<svg style="position:absolute;left:946px;top:519px;" width="11" height="14" viewBox="0 0 11 14"><path d="M0 4 L5.5 0 L11 4 V14 H0Z" fill="#888888"/></svg>
<div class="t" style="right:256.5px;top:516px;font-size:11px;line-height:13px;color:#3aa0e0;text-align:right">100,00</div>
<div class="t" style="left:1172.5px;top:516px;font-size:11px;line-height:13px;color:#bdbdbd">Hz</div>
<div class="t" style="left:778px;top:543px;font-size:10.6px;line-height:13px;color:#bdbdbd;letter-spacing:-0.3px">FFT Size:</div>
<div style="left:822px;top:538px;width:76px;height:21px;background:#1b1b1b;"></div>
<div class="t" style="left:829px;top:543px;font-size:11px;line-height:13px;color:#e8e8e8">512</div>
<svg style="position:absolute;left:884px;top:545px;" width="11" height="7" viewBox="0 0 11 7"><path d="M0.5 0.5 H10 L5.25 5.5Z" fill="#dcdcdc"/></svg>
<div style="left:822px;top:569px;width:14px;height:14px;background:#000;"></div>
<div style="left:822px;top:582px;width:14px;height:1px;background:#2a8ad0;"></div>
<svg style="position:absolute;left:822px;top:569px;" width="14" height="14" viewBox="0 0 14 14"><path d="M3 7 L6 10.5 L11.5 2" fill="none" stroke="#ffffff" stroke-width="1.6"/></svg>
<div class="t" style="left:839px;top:570px;font-size:10.9px;line-height:13px;color:#bdbdbd">High Quality Mode (slower)</div>
<div style="left:757px;top:614px;width:479px;height:1px;background:#343434;"></div>
<div style="left:756px;top:625px;width:19px;height:19px;background:#36a36c;"></div>
<svg style="position:absolute;left:756px;top:625px;" width="19" height="19" viewBox="0 0 19 19"><path d="M6.6 6 A4.6 4.6 0 1 0 12.4 6" fill="none" stroke="#e8f5ee" stroke-width="1.3"/><path d="M9.5 3.6 V9" stroke="#e8f5ee" stroke-width="1.3"/></svg>
<div class="t" style="left:1118px;top:628px;font-size:10.6px;line-height:13px;color:#bdbdbd">Track: Track 1</div>
<div style="left:1190px;top:627px;width:1px;height:19px;background:#1a1a1a;"></div>
<div class="t" style="left:1197px;top:628px;font-size:10.6px;line-height:13px;color:#bdbdbd">Slot 1</div>
</body></html>
